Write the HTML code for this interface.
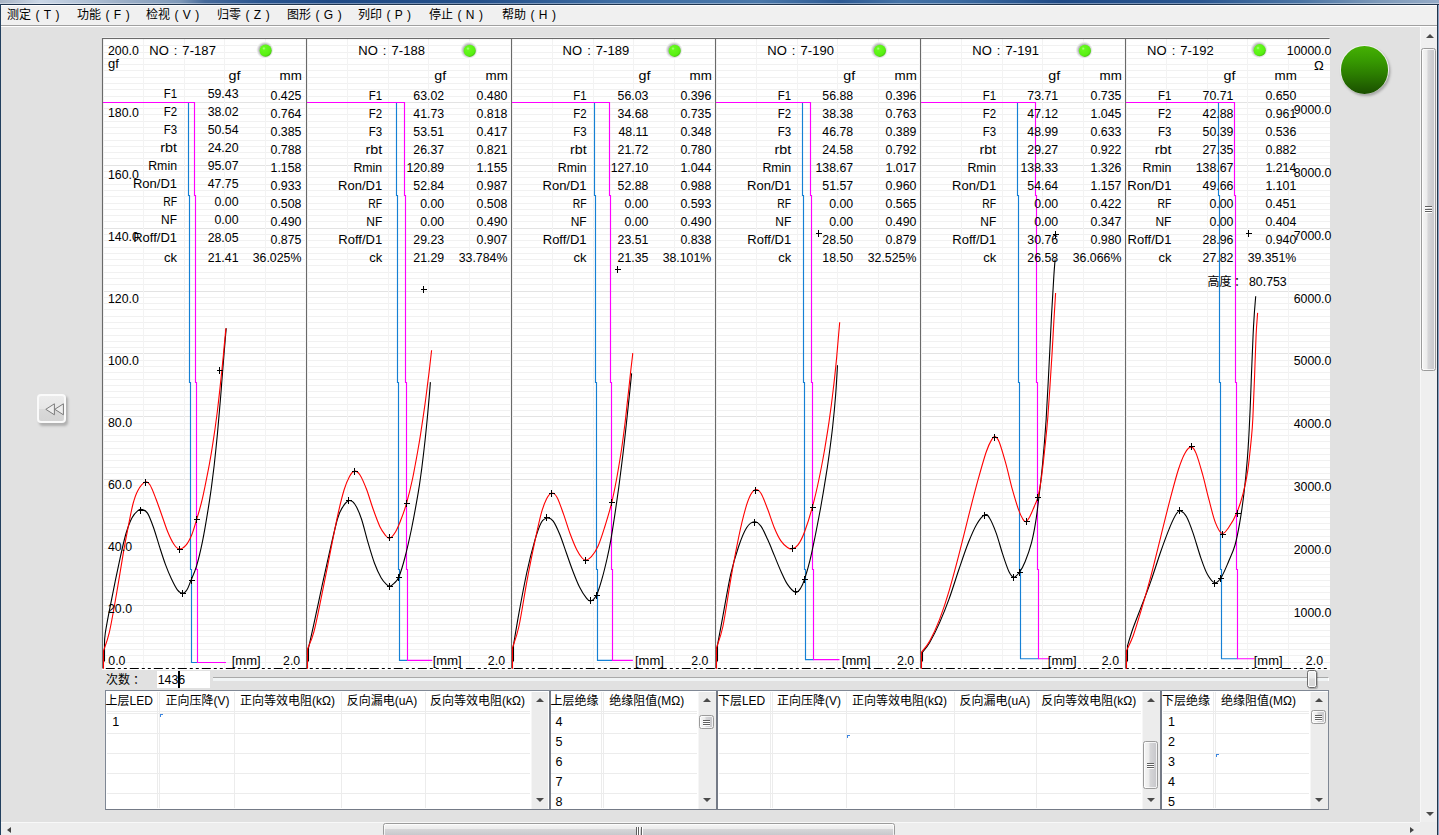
<!DOCTYPE html><html lang="zh"><head><meta charset="utf-8"><title>测定</title><style>

html,body{margin:0;padding:0}
body{width:1439px;height:835px;overflow:hidden;position:relative;background:#e1e1e1;font-family:"Liberation Sans","Noto Sans CJK SC",sans-serif;font-size:13px;color:#000}
.abs{position:absolute}
#titlebar{left:0;top:0;width:1439px;height:4px;background:linear-gradient(90deg,#a8b4c4 0px,#c9d6e6 40px,#9db0c8 120px,#7e98b8 180px,#45699a 205px,#2a5590 260px,#1f4a86 330px,#24508a 480px,#3f6ea4 620px,#4a78aa 760px,#2d5a94 840px,#4472a6 900px,#3b6aa0 960px,#1f4a86 1060px,#2a5690 1200px,#4a74a4 1300px,#7e9aba 1380px,#94aac6 1439px)}
#titlebar2{left:0;top:3px;width:1439px;height:1px;background:rgba(255,255,255,.4)}
#titlebar3{left:0;top:4px;width:1439px;height:1px;background:#1f344e}
#frameL{left:0;top:4px;width:1.2px;height:831px;background:#22405f}
#frameR{left:1436px;top:5px;width:3px;height:830px;background:linear-gradient(90deg,#fdfdfd 0,#fdfdfd 33%,#22354b 34%,#22354b 70%,#8aa3c2 72%)}
#menubar{left:1px;top:5px;width:1436px;height:20px;background:#f0f0f0;border-top:1px solid #fff;box-sizing:content-box;height:19px;border-bottom:1px solid #a0a0a0;box-shadow:0 1px 0 #fff;font-size:12px}
#menubar span{position:absolute;top:2px;word-spacing:1.1px;white-space:pre;line-height:15px}
svg text{font-family:"Liberation Sans","Noto Sans CJK SC",sans-serif}
.t{position:absolute;white-space:pre;line-height:16px}

#bigled{left:1339.8px;top:44.9px;width:49.6px;height:49.6px;border-radius:50%;background:#f1f1f1;box-shadow:1.5px 2px 2.5px rgba(0,0,0,.26)}
#bigled i{position:absolute;left:0.9px;top:0.9px;width:47.8px;height:47.8px;border-radius:50%;background:linear-gradient(#45b103 0,#379a01 30%,#2b7c00 60%,#1a4e00 100%)}
#rew{left:37px;top:394px;width:29px;height:29px;border-radius:4px;background:#fafafa;box-shadow:2px 2.5px 2.5px rgba(0,0,0,.22)}
#rew i{position:absolute;left:2px;top:2px;right:2px;bottom:2px;border-radius:2px;background:linear-gradient(#ececec 0,#e6e6e6 50%,#d9d9d9 52%,#d4d4d4 100%)}
#cnt{left:106px;top:672px;font-size:12px;line-height:16px;white-space:pre}
#cntbox{left:157px;top:671px;width:53px;height:17px;background:#fff}
#cntbox span{position:absolute;left:0.7px;top:1.5px;font-size:12.4px;line-height:14px}
#caret{left:178.3px;top:671px;width:1.5px;height:16.5px;background:#000}
#trk{left:213px;top:677px;width:1116px;height:4px;background:#f1f4f5;border-top:1px solid #a9a9a9;box-sizing:border-box;border-right:1px solid #fff}
#knob{left:1307.3px;top:669.6px;width:9.4px;height:18.2px;box-sizing:border-box;border:1px solid #6c6c6c;border-radius:2.5px;background:linear-gradient(#f3f3f3 0,#e9e9e9 46%,#dcdcdc 48%,#d6d6d6 100%);box-shadow:inset 0 0 0 1px #fbfbfb,1px 1px 1px rgba(0,0,0,.25)}
#tbl{left:105px;top:690px;width:1224px;height:120px;background:#fff;box-sizing:border-box;border:1px solid #7f8794;border-bottom-color:#747a86;font-size:12px}
#tbl .h{position:absolute;top:1.8px;line-height:16px;white-space:pre}
#tbl .n{position:absolute;line-height:16px;font-size:12.6px}
.sb{position:absolute;top:1px;height:117px;background:#ececec;border-left:1px solid #f6f6f6;box-sizing:border-box}
.sep{position:absolute;top:0;height:118px;width:2px;background:#747a86}
.au,.ad{position:absolute;width:0;height:0;border-left:4px solid transparent;border-right:4px solid transparent;}
.au{border-bottom:4px solid #4a4a4a}
.ad{border-top:4px solid #4a4a4a}
.th{position:absolute;box-sizing:border-box;border:1px solid #9b9b9b;border-radius:2.5px;background:linear-gradient(90deg,#f5f5f5 0,#ececec 38%,#d6d6d8 46%,#c6c6ca 100%);box-shadow:inset 0 0 0 1px rgba(255,255,255,.75)}
.gr{position:absolute;left:3px;right:3px;height:1px;background:#5f5f5f;box-shadow:0 1px 0 #fff}
#vsb{left:1420px;top:27px;width:17px;height:796px;background:#efefef;border-left:1px solid #f7f7f7;box-sizing:border-box}
#hsb{left:1px;top:822px;width:1419px;height:13px;background:#ededed;border-top:1px solid #f8f8f8;box-sizing:border-box}
#corner{left:1420px;top:822px;width:17px;height:13px;background:#ececec}
.al,.ar{position:absolute;width:0;height:0;border-top:3.5px solid transparent;border-bottom:3.5px solid transparent}
.al{border-right:4px solid #444}
.ar{border-left:4px solid #444}
.thh{position:absolute;box-sizing:border-box;border:1px solid #9b9b9b;border-radius:2.5px;background:linear-gradient(#f5f5f5 0,#ececec 38%,#d6d6d8 46%,#c6c6ca 100%);box-shadow:inset 0 0 0 1px rgba(255,255,255,.75)}
.gv{position:absolute;top:3px;width:1px;height:8px;background:#5f5f5f;box-shadow:1px 0 0 #fff}
.cm{position:absolute;width:3px;height:3px;border-left:1px solid #3d86e0;border-top:1px solid #3d86e0;box-sizing:border-box}

</style></head><body>
<div class="abs" id="titlebar"></div><div class="abs" id="titlebar2"></div><div class="abs" id="titlebar3"></div><div class="abs" id="frameL"></div><div class="abs" id="frameR"></div>
<div class="abs" id="menubar">
<span style="left:6px">测定 ( T )</span>
<span style="left:76px">功能 ( F )</span>
<span style="left:145px">检视 ( V )</span>
<span style="left:216px">归零 ( Z )</span>
<span style="left:286px">图形 ( G )</span>
<span style="left:357px">列印 ( P )</span>
<span style="left:428px">停止 ( N )</span>
<span style="left:501px">帮助 ( H )</span>
</div>
<svg class="abs" style="left:100px;top:36px" width="1232" height="634" viewBox="100 36 1232 634" font-size="13">
<rect x="102" y="38" width="1228" height="632" fill="#fff"/>
<g shape-rendering="crispEdges"><line x1="104" x2="305" y1="662.5" y2="662.5" stroke="#f1f1f1"/><line x1="308" x2="510" y1="662.5" y2="662.5" stroke="#f1f1f1"/><line x1="513" x2="714" y1="662.5" y2="662.5" stroke="#f1f1f1"/><line x1="717" x2="919" y1="662.5" y2="662.5" stroke="#f1f1f1"/><line x1="922" x2="1124" y1="662.5" y2="662.5" stroke="#f1f1f1"/><line x1="1127" x2="1329.6" y1="662.5" y2="662.5" stroke="#f1f1f1"/><line x1="104" x2="305" y1="655.5" y2="655.5" stroke="#f1f1f1"/><line x1="308" x2="510" y1="655.5" y2="655.5" stroke="#f1f1f1"/><line x1="513" x2="714" y1="655.5" y2="655.5" stroke="#f1f1f1"/><line x1="717" x2="919" y1="655.5" y2="655.5" stroke="#f1f1f1"/><line x1="922" x2="1124" y1="655.5" y2="655.5" stroke="#f1f1f1"/><line x1="1127" x2="1329.6" y1="655.5" y2="655.5" stroke="#f1f1f1"/><line x1="104" x2="305" y1="649.5" y2="649.5" stroke="#f1f1f1"/><line x1="308" x2="510" y1="649.5" y2="649.5" stroke="#f1f1f1"/><line x1="513" x2="714" y1="649.5" y2="649.5" stroke="#f1f1f1"/><line x1="717" x2="919" y1="649.5" y2="649.5" stroke="#f1f1f1"/><line x1="922" x2="1124" y1="649.5" y2="649.5" stroke="#f1f1f1"/><line x1="1127" x2="1329.6" y1="649.5" y2="649.5" stroke="#f1f1f1"/><line x1="104" x2="305" y1="643.5" y2="643.5" stroke="#f1f1f1"/><line x1="308" x2="510" y1="643.5" y2="643.5" stroke="#f1f1f1"/><line x1="513" x2="714" y1="643.5" y2="643.5" stroke="#f1f1f1"/><line x1="717" x2="919" y1="643.5" y2="643.5" stroke="#f1f1f1"/><line x1="922" x2="1124" y1="643.5" y2="643.5" stroke="#f1f1f1"/><line x1="1127" x2="1329.6" y1="643.5" y2="643.5" stroke="#f1f1f1"/><line x1="104" x2="305" y1="636.5" y2="636.5" stroke="#f1f1f1"/><line x1="308" x2="510" y1="636.5" y2="636.5" stroke="#f1f1f1"/><line x1="513" x2="714" y1="636.5" y2="636.5" stroke="#f1f1f1"/><line x1="717" x2="919" y1="636.5" y2="636.5" stroke="#f1f1f1"/><line x1="922" x2="1124" y1="636.5" y2="636.5" stroke="#f1f1f1"/><line x1="1127" x2="1329.6" y1="636.5" y2="636.5" stroke="#f1f1f1"/><line x1="104" x2="305" y1="630.5" y2="630.5" stroke="#f1f1f1"/><line x1="308" x2="510" y1="630.5" y2="630.5" stroke="#f1f1f1"/><line x1="513" x2="714" y1="630.5" y2="630.5" stroke="#f1f1f1"/><line x1="717" x2="919" y1="630.5" y2="630.5" stroke="#f1f1f1"/><line x1="922" x2="1124" y1="630.5" y2="630.5" stroke="#f1f1f1"/><line x1="1127" x2="1329.6" y1="630.5" y2="630.5" stroke="#f1f1f1"/><line x1="104" x2="305" y1="624.5" y2="624.5" stroke="#f1f1f1"/><line x1="308" x2="510" y1="624.5" y2="624.5" stroke="#f1f1f1"/><line x1="513" x2="714" y1="624.5" y2="624.5" stroke="#f1f1f1"/><line x1="717" x2="919" y1="624.5" y2="624.5" stroke="#f1f1f1"/><line x1="922" x2="1124" y1="624.5" y2="624.5" stroke="#f1f1f1"/><line x1="1127" x2="1329.6" y1="624.5" y2="624.5" stroke="#f1f1f1"/><line x1="104" x2="305" y1="618.5" y2="618.5" stroke="#f1f1f1"/><line x1="308" x2="510" y1="618.5" y2="618.5" stroke="#f1f1f1"/><line x1="513" x2="714" y1="618.5" y2="618.5" stroke="#f1f1f1"/><line x1="717" x2="919" y1="618.5" y2="618.5" stroke="#f1f1f1"/><line x1="922" x2="1124" y1="618.5" y2="618.5" stroke="#f1f1f1"/><line x1="1127" x2="1329.6" y1="618.5" y2="618.5" stroke="#f1f1f1"/><line x1="104" x2="305" y1="611.5" y2="611.5" stroke="#f1f1f1"/><line x1="308" x2="510" y1="611.5" y2="611.5" stroke="#f1f1f1"/><line x1="513" x2="714" y1="611.5" y2="611.5" stroke="#f1f1f1"/><line x1="717" x2="919" y1="611.5" y2="611.5" stroke="#f1f1f1"/><line x1="922" x2="1124" y1="611.5" y2="611.5" stroke="#f1f1f1"/><line x1="1127" x2="1329.6" y1="611.5" y2="611.5" stroke="#f1f1f1"/><line x1="104" x2="305" y1="605.5" y2="605.5" stroke="#e3e3e3"/><line x1="308" x2="510" y1="605.5" y2="605.5" stroke="#e3e3e3"/><line x1="513" x2="714" y1="605.5" y2="605.5" stroke="#e3e3e3"/><line x1="717" x2="919" y1="605.5" y2="605.5" stroke="#e3e3e3"/><line x1="922" x2="1124" y1="605.5" y2="605.5" stroke="#e3e3e3"/><line x1="1127" x2="1329.6" y1="605.5" y2="605.5" stroke="#e3e3e3"/><line x1="104" x2="305" y1="599.5" y2="599.5" stroke="#f1f1f1"/><line x1="308" x2="510" y1="599.5" y2="599.5" stroke="#f1f1f1"/><line x1="513" x2="714" y1="599.5" y2="599.5" stroke="#f1f1f1"/><line x1="717" x2="919" y1="599.5" y2="599.5" stroke="#f1f1f1"/><line x1="922" x2="1124" y1="599.5" y2="599.5" stroke="#f1f1f1"/><line x1="1127" x2="1329.6" y1="599.5" y2="599.5" stroke="#f1f1f1"/><line x1="104" x2="305" y1="592.5" y2="592.5" stroke="#f1f1f1"/><line x1="308" x2="510" y1="592.5" y2="592.5" stroke="#f1f1f1"/><line x1="513" x2="714" y1="592.5" y2="592.5" stroke="#f1f1f1"/><line x1="717" x2="919" y1="592.5" y2="592.5" stroke="#f1f1f1"/><line x1="922" x2="1124" y1="592.5" y2="592.5" stroke="#f1f1f1"/><line x1="1127" x2="1329.6" y1="592.5" y2="592.5" stroke="#f1f1f1"/><line x1="104" x2="305" y1="586.5" y2="586.5" stroke="#f1f1f1"/><line x1="308" x2="510" y1="586.5" y2="586.5" stroke="#f1f1f1"/><line x1="513" x2="714" y1="586.5" y2="586.5" stroke="#f1f1f1"/><line x1="717" x2="919" y1="586.5" y2="586.5" stroke="#f1f1f1"/><line x1="922" x2="1124" y1="586.5" y2="586.5" stroke="#f1f1f1"/><line x1="1127" x2="1329.6" y1="586.5" y2="586.5" stroke="#f1f1f1"/><line x1="104" x2="305" y1="580.5" y2="580.5" stroke="#f1f1f1"/><line x1="308" x2="510" y1="580.5" y2="580.5" stroke="#f1f1f1"/><line x1="513" x2="714" y1="580.5" y2="580.5" stroke="#f1f1f1"/><line x1="717" x2="919" y1="580.5" y2="580.5" stroke="#f1f1f1"/><line x1="922" x2="1124" y1="580.5" y2="580.5" stroke="#f1f1f1"/><line x1="1127" x2="1329.6" y1="580.5" y2="580.5" stroke="#f1f1f1"/><line x1="104" x2="305" y1="574.5" y2="574.5" stroke="#f1f1f1"/><line x1="308" x2="510" y1="574.5" y2="574.5" stroke="#f1f1f1"/><line x1="513" x2="714" y1="574.5" y2="574.5" stroke="#f1f1f1"/><line x1="717" x2="919" y1="574.5" y2="574.5" stroke="#f1f1f1"/><line x1="922" x2="1124" y1="574.5" y2="574.5" stroke="#f1f1f1"/><line x1="1127" x2="1329.6" y1="574.5" y2="574.5" stroke="#f1f1f1"/><line x1="104" x2="305" y1="567.5" y2="567.5" stroke="#f1f1f1"/><line x1="308" x2="510" y1="567.5" y2="567.5" stroke="#f1f1f1"/><line x1="513" x2="714" y1="567.5" y2="567.5" stroke="#f1f1f1"/><line x1="717" x2="919" y1="567.5" y2="567.5" stroke="#f1f1f1"/><line x1="922" x2="1124" y1="567.5" y2="567.5" stroke="#f1f1f1"/><line x1="1127" x2="1329.6" y1="567.5" y2="567.5" stroke="#f1f1f1"/><line x1="104" x2="305" y1="561.5" y2="561.5" stroke="#f1f1f1"/><line x1="308" x2="510" y1="561.5" y2="561.5" stroke="#f1f1f1"/><line x1="513" x2="714" y1="561.5" y2="561.5" stroke="#f1f1f1"/><line x1="717" x2="919" y1="561.5" y2="561.5" stroke="#f1f1f1"/><line x1="922" x2="1124" y1="561.5" y2="561.5" stroke="#f1f1f1"/><line x1="1127" x2="1329.6" y1="561.5" y2="561.5" stroke="#f1f1f1"/><line x1="104" x2="305" y1="555.5" y2="555.5" stroke="#f1f1f1"/><line x1="308" x2="510" y1="555.5" y2="555.5" stroke="#f1f1f1"/><line x1="513" x2="714" y1="555.5" y2="555.5" stroke="#f1f1f1"/><line x1="717" x2="919" y1="555.5" y2="555.5" stroke="#f1f1f1"/><line x1="922" x2="1124" y1="555.5" y2="555.5" stroke="#f1f1f1"/><line x1="1127" x2="1329.6" y1="555.5" y2="555.5" stroke="#f1f1f1"/><line x1="104" x2="305" y1="548.5" y2="548.5" stroke="#f1f1f1"/><line x1="308" x2="510" y1="548.5" y2="548.5" stroke="#f1f1f1"/><line x1="513" x2="714" y1="548.5" y2="548.5" stroke="#f1f1f1"/><line x1="717" x2="919" y1="548.5" y2="548.5" stroke="#f1f1f1"/><line x1="922" x2="1124" y1="548.5" y2="548.5" stroke="#f1f1f1"/><line x1="1127" x2="1329.6" y1="548.5" y2="548.5" stroke="#f1f1f1"/><line x1="104" x2="305" y1="542.5" y2="542.5" stroke="#e3e3e3"/><line x1="308" x2="510" y1="542.5" y2="542.5" stroke="#e3e3e3"/><line x1="513" x2="714" y1="542.5" y2="542.5" stroke="#e3e3e3"/><line x1="717" x2="919" y1="542.5" y2="542.5" stroke="#e3e3e3"/><line x1="922" x2="1124" y1="542.5" y2="542.5" stroke="#e3e3e3"/><line x1="1127" x2="1329.6" y1="542.5" y2="542.5" stroke="#e3e3e3"/><line x1="104" x2="305" y1="536.5" y2="536.5" stroke="#f1f1f1"/><line x1="308" x2="510" y1="536.5" y2="536.5" stroke="#f1f1f1"/><line x1="513" x2="714" y1="536.5" y2="536.5" stroke="#f1f1f1"/><line x1="717" x2="919" y1="536.5" y2="536.5" stroke="#f1f1f1"/><line x1="922" x2="1124" y1="536.5" y2="536.5" stroke="#f1f1f1"/><line x1="1127" x2="1329.6" y1="536.5" y2="536.5" stroke="#f1f1f1"/><line x1="104" x2="305" y1="529.5" y2="529.5" stroke="#f1f1f1"/><line x1="308" x2="510" y1="529.5" y2="529.5" stroke="#f1f1f1"/><line x1="513" x2="714" y1="529.5" y2="529.5" stroke="#f1f1f1"/><line x1="717" x2="919" y1="529.5" y2="529.5" stroke="#f1f1f1"/><line x1="922" x2="1124" y1="529.5" y2="529.5" stroke="#f1f1f1"/><line x1="1127" x2="1329.6" y1="529.5" y2="529.5" stroke="#f1f1f1"/><line x1="104" x2="305" y1="523.5" y2="523.5" stroke="#f1f1f1"/><line x1="308" x2="510" y1="523.5" y2="523.5" stroke="#f1f1f1"/><line x1="513" x2="714" y1="523.5" y2="523.5" stroke="#f1f1f1"/><line x1="717" x2="919" y1="523.5" y2="523.5" stroke="#f1f1f1"/><line x1="922" x2="1124" y1="523.5" y2="523.5" stroke="#f1f1f1"/><line x1="1127" x2="1329.6" y1="523.5" y2="523.5" stroke="#f1f1f1"/><line x1="104" x2="305" y1="517.5" y2="517.5" stroke="#f1f1f1"/><line x1="308" x2="510" y1="517.5" y2="517.5" stroke="#f1f1f1"/><line x1="513" x2="714" y1="517.5" y2="517.5" stroke="#f1f1f1"/><line x1="717" x2="919" y1="517.5" y2="517.5" stroke="#f1f1f1"/><line x1="922" x2="1124" y1="517.5" y2="517.5" stroke="#f1f1f1"/><line x1="1127" x2="1329.6" y1="517.5" y2="517.5" stroke="#f1f1f1"/><line x1="104" x2="305" y1="511.5" y2="511.5" stroke="#f1f1f1"/><line x1="308" x2="510" y1="511.5" y2="511.5" stroke="#f1f1f1"/><line x1="513" x2="714" y1="511.5" y2="511.5" stroke="#f1f1f1"/><line x1="717" x2="919" y1="511.5" y2="511.5" stroke="#f1f1f1"/><line x1="922" x2="1124" y1="511.5" y2="511.5" stroke="#f1f1f1"/><line x1="1127" x2="1329.6" y1="511.5" y2="511.5" stroke="#f1f1f1"/><line x1="104" x2="305" y1="504.5" y2="504.5" stroke="#f1f1f1"/><line x1="308" x2="510" y1="504.5" y2="504.5" stroke="#f1f1f1"/><line x1="513" x2="714" y1="504.5" y2="504.5" stroke="#f1f1f1"/><line x1="717" x2="919" y1="504.5" y2="504.5" stroke="#f1f1f1"/><line x1="922" x2="1124" y1="504.5" y2="504.5" stroke="#f1f1f1"/><line x1="1127" x2="1329.6" y1="504.5" y2="504.5" stroke="#f1f1f1"/><line x1="104" x2="305" y1="498.5" y2="498.5" stroke="#f1f1f1"/><line x1="308" x2="510" y1="498.5" y2="498.5" stroke="#f1f1f1"/><line x1="513" x2="714" y1="498.5" y2="498.5" stroke="#f1f1f1"/><line x1="717" x2="919" y1="498.5" y2="498.5" stroke="#f1f1f1"/><line x1="922" x2="1124" y1="498.5" y2="498.5" stroke="#f1f1f1"/><line x1="1127" x2="1329.6" y1="498.5" y2="498.5" stroke="#f1f1f1"/><line x1="104" x2="305" y1="492.5" y2="492.5" stroke="#f1f1f1"/><line x1="308" x2="510" y1="492.5" y2="492.5" stroke="#f1f1f1"/><line x1="513" x2="714" y1="492.5" y2="492.5" stroke="#f1f1f1"/><line x1="717" x2="919" y1="492.5" y2="492.5" stroke="#f1f1f1"/><line x1="922" x2="1124" y1="492.5" y2="492.5" stroke="#f1f1f1"/><line x1="1127" x2="1329.6" y1="492.5" y2="492.5" stroke="#f1f1f1"/><line x1="104" x2="305" y1="485.5" y2="485.5" stroke="#f1f1f1"/><line x1="308" x2="510" y1="485.5" y2="485.5" stroke="#f1f1f1"/><line x1="513" x2="714" y1="485.5" y2="485.5" stroke="#f1f1f1"/><line x1="717" x2="919" y1="485.5" y2="485.5" stroke="#f1f1f1"/><line x1="922" x2="1124" y1="485.5" y2="485.5" stroke="#f1f1f1"/><line x1="1127" x2="1329.6" y1="485.5" y2="485.5" stroke="#f1f1f1"/><line x1="104" x2="305" y1="479.5" y2="479.5" stroke="#e3e3e3"/><line x1="308" x2="510" y1="479.5" y2="479.5" stroke="#e3e3e3"/><line x1="513" x2="714" y1="479.5" y2="479.5" stroke="#e3e3e3"/><line x1="717" x2="919" y1="479.5" y2="479.5" stroke="#e3e3e3"/><line x1="922" x2="1124" y1="479.5" y2="479.5" stroke="#e3e3e3"/><line x1="1127" x2="1329.6" y1="479.5" y2="479.5" stroke="#e3e3e3"/><line x1="104" x2="305" y1="473.5" y2="473.5" stroke="#f1f1f1"/><line x1="308" x2="510" y1="473.5" y2="473.5" stroke="#f1f1f1"/><line x1="513" x2="714" y1="473.5" y2="473.5" stroke="#f1f1f1"/><line x1="717" x2="919" y1="473.5" y2="473.5" stroke="#f1f1f1"/><line x1="922" x2="1124" y1="473.5" y2="473.5" stroke="#f1f1f1"/><line x1="1127" x2="1329.6" y1="473.5" y2="473.5" stroke="#f1f1f1"/><line x1="104" x2="305" y1="467.5" y2="467.5" stroke="#f1f1f1"/><line x1="308" x2="510" y1="467.5" y2="467.5" stroke="#f1f1f1"/><line x1="513" x2="714" y1="467.5" y2="467.5" stroke="#f1f1f1"/><line x1="717" x2="919" y1="467.5" y2="467.5" stroke="#f1f1f1"/><line x1="922" x2="1124" y1="467.5" y2="467.5" stroke="#f1f1f1"/><line x1="1127" x2="1329.6" y1="467.5" y2="467.5" stroke="#f1f1f1"/><line x1="104" x2="305" y1="460.5" y2="460.5" stroke="#f1f1f1"/><line x1="308" x2="510" y1="460.5" y2="460.5" stroke="#f1f1f1"/><line x1="513" x2="714" y1="460.5" y2="460.5" stroke="#f1f1f1"/><line x1="717" x2="919" y1="460.5" y2="460.5" stroke="#f1f1f1"/><line x1="922" x2="1124" y1="460.5" y2="460.5" stroke="#f1f1f1"/><line x1="1127" x2="1329.6" y1="460.5" y2="460.5" stroke="#f1f1f1"/><line x1="104" x2="305" y1="454.5" y2="454.5" stroke="#f1f1f1"/><line x1="308" x2="510" y1="454.5" y2="454.5" stroke="#f1f1f1"/><line x1="513" x2="714" y1="454.5" y2="454.5" stroke="#f1f1f1"/><line x1="717" x2="919" y1="454.5" y2="454.5" stroke="#f1f1f1"/><line x1="922" x2="1124" y1="454.5" y2="454.5" stroke="#f1f1f1"/><line x1="1127" x2="1329.6" y1="454.5" y2="454.5" stroke="#f1f1f1"/><line x1="104" x2="305" y1="448.5" y2="448.5" stroke="#f1f1f1"/><line x1="308" x2="510" y1="448.5" y2="448.5" stroke="#f1f1f1"/><line x1="513" x2="714" y1="448.5" y2="448.5" stroke="#f1f1f1"/><line x1="717" x2="919" y1="448.5" y2="448.5" stroke="#f1f1f1"/><line x1="922" x2="1124" y1="448.5" y2="448.5" stroke="#f1f1f1"/><line x1="1127" x2="1329.6" y1="448.5" y2="448.5" stroke="#f1f1f1"/><line x1="104" x2="305" y1="441.5" y2="441.5" stroke="#f1f1f1"/><line x1="308" x2="510" y1="441.5" y2="441.5" stroke="#f1f1f1"/><line x1="513" x2="714" y1="441.5" y2="441.5" stroke="#f1f1f1"/><line x1="717" x2="919" y1="441.5" y2="441.5" stroke="#f1f1f1"/><line x1="922" x2="1124" y1="441.5" y2="441.5" stroke="#f1f1f1"/><line x1="1127" x2="1329.6" y1="441.5" y2="441.5" stroke="#f1f1f1"/><line x1="104" x2="305" y1="435.5" y2="435.5" stroke="#f1f1f1"/><line x1="308" x2="510" y1="435.5" y2="435.5" stroke="#f1f1f1"/><line x1="513" x2="714" y1="435.5" y2="435.5" stroke="#f1f1f1"/><line x1="717" x2="919" y1="435.5" y2="435.5" stroke="#f1f1f1"/><line x1="922" x2="1124" y1="435.5" y2="435.5" stroke="#f1f1f1"/><line x1="1127" x2="1329.6" y1="435.5" y2="435.5" stroke="#f1f1f1"/><line x1="104" x2="305" y1="429.5" y2="429.5" stroke="#f1f1f1"/><line x1="308" x2="510" y1="429.5" y2="429.5" stroke="#f1f1f1"/><line x1="513" x2="714" y1="429.5" y2="429.5" stroke="#f1f1f1"/><line x1="717" x2="919" y1="429.5" y2="429.5" stroke="#f1f1f1"/><line x1="922" x2="1124" y1="429.5" y2="429.5" stroke="#f1f1f1"/><line x1="1127" x2="1329.6" y1="429.5" y2="429.5" stroke="#f1f1f1"/><line x1="104" x2="305" y1="423.5" y2="423.5" stroke="#f1f1f1"/><line x1="308" x2="510" y1="423.5" y2="423.5" stroke="#f1f1f1"/><line x1="513" x2="714" y1="423.5" y2="423.5" stroke="#f1f1f1"/><line x1="717" x2="919" y1="423.5" y2="423.5" stroke="#f1f1f1"/><line x1="922" x2="1124" y1="423.5" y2="423.5" stroke="#f1f1f1"/><line x1="1127" x2="1329.6" y1="423.5" y2="423.5" stroke="#f1f1f1"/><line x1="104" x2="305" y1="416.5" y2="416.5" stroke="#e3e3e3"/><line x1="308" x2="510" y1="416.5" y2="416.5" stroke="#e3e3e3"/><line x1="513" x2="714" y1="416.5" y2="416.5" stroke="#e3e3e3"/><line x1="717" x2="919" y1="416.5" y2="416.5" stroke="#e3e3e3"/><line x1="922" x2="1124" y1="416.5" y2="416.5" stroke="#e3e3e3"/><line x1="1127" x2="1329.6" y1="416.5" y2="416.5" stroke="#e3e3e3"/><line x1="104" x2="305" y1="410.5" y2="410.5" stroke="#f1f1f1"/><line x1="308" x2="510" y1="410.5" y2="410.5" stroke="#f1f1f1"/><line x1="513" x2="714" y1="410.5" y2="410.5" stroke="#f1f1f1"/><line x1="717" x2="919" y1="410.5" y2="410.5" stroke="#f1f1f1"/><line x1="922" x2="1124" y1="410.5" y2="410.5" stroke="#f1f1f1"/><line x1="1127" x2="1329.6" y1="410.5" y2="410.5" stroke="#f1f1f1"/><line x1="104" x2="305" y1="404.5" y2="404.5" stroke="#f1f1f1"/><line x1="308" x2="510" y1="404.5" y2="404.5" stroke="#f1f1f1"/><line x1="513" x2="714" y1="404.5" y2="404.5" stroke="#f1f1f1"/><line x1="717" x2="919" y1="404.5" y2="404.5" stroke="#f1f1f1"/><line x1="922" x2="1124" y1="404.5" y2="404.5" stroke="#f1f1f1"/><line x1="1127" x2="1329.6" y1="404.5" y2="404.5" stroke="#f1f1f1"/><line x1="104" x2="305" y1="397.5" y2="397.5" stroke="#f1f1f1"/><line x1="308" x2="510" y1="397.5" y2="397.5" stroke="#f1f1f1"/><line x1="513" x2="714" y1="397.5" y2="397.5" stroke="#f1f1f1"/><line x1="717" x2="919" y1="397.5" y2="397.5" stroke="#f1f1f1"/><line x1="922" x2="1124" y1="397.5" y2="397.5" stroke="#f1f1f1"/><line x1="1127" x2="1329.6" y1="397.5" y2="397.5" stroke="#f1f1f1"/><line x1="104" x2="305" y1="391.5" y2="391.5" stroke="#f1f1f1"/><line x1="308" x2="510" y1="391.5" y2="391.5" stroke="#f1f1f1"/><line x1="513" x2="714" y1="391.5" y2="391.5" stroke="#f1f1f1"/><line x1="717" x2="919" y1="391.5" y2="391.5" stroke="#f1f1f1"/><line x1="922" x2="1124" y1="391.5" y2="391.5" stroke="#f1f1f1"/><line x1="1127" x2="1329.6" y1="391.5" y2="391.5" stroke="#f1f1f1"/><line x1="104" x2="305" y1="385.5" y2="385.5" stroke="#f1f1f1"/><line x1="308" x2="510" y1="385.5" y2="385.5" stroke="#f1f1f1"/><line x1="513" x2="714" y1="385.5" y2="385.5" stroke="#f1f1f1"/><line x1="717" x2="919" y1="385.5" y2="385.5" stroke="#f1f1f1"/><line x1="922" x2="1124" y1="385.5" y2="385.5" stroke="#f1f1f1"/><line x1="1127" x2="1329.6" y1="385.5" y2="385.5" stroke="#f1f1f1"/><line x1="104" x2="305" y1="379.5" y2="379.5" stroke="#f1f1f1"/><line x1="308" x2="510" y1="379.5" y2="379.5" stroke="#f1f1f1"/><line x1="513" x2="714" y1="379.5" y2="379.5" stroke="#f1f1f1"/><line x1="717" x2="919" y1="379.5" y2="379.5" stroke="#f1f1f1"/><line x1="922" x2="1124" y1="379.5" y2="379.5" stroke="#f1f1f1"/><line x1="1127" x2="1329.6" y1="379.5" y2="379.5" stroke="#f1f1f1"/><line x1="104" x2="305" y1="372.5" y2="372.5" stroke="#f1f1f1"/><line x1="308" x2="510" y1="372.5" y2="372.5" stroke="#f1f1f1"/><line x1="513" x2="714" y1="372.5" y2="372.5" stroke="#f1f1f1"/><line x1="717" x2="919" y1="372.5" y2="372.5" stroke="#f1f1f1"/><line x1="922" x2="1124" y1="372.5" y2="372.5" stroke="#f1f1f1"/><line x1="1127" x2="1329.6" y1="372.5" y2="372.5" stroke="#f1f1f1"/><line x1="104" x2="305" y1="366.5" y2="366.5" stroke="#f1f1f1"/><line x1="308" x2="510" y1="366.5" y2="366.5" stroke="#f1f1f1"/><line x1="513" x2="714" y1="366.5" y2="366.5" stroke="#f1f1f1"/><line x1="717" x2="919" y1="366.5" y2="366.5" stroke="#f1f1f1"/><line x1="922" x2="1124" y1="366.5" y2="366.5" stroke="#f1f1f1"/><line x1="1127" x2="1329.6" y1="366.5" y2="366.5" stroke="#f1f1f1"/><line x1="104" x2="305" y1="360.5" y2="360.5" stroke="#f1f1f1"/><line x1="308" x2="510" y1="360.5" y2="360.5" stroke="#f1f1f1"/><line x1="513" x2="714" y1="360.5" y2="360.5" stroke="#f1f1f1"/><line x1="717" x2="919" y1="360.5" y2="360.5" stroke="#f1f1f1"/><line x1="922" x2="1124" y1="360.5" y2="360.5" stroke="#f1f1f1"/><line x1="1127" x2="1329.6" y1="360.5" y2="360.5" stroke="#f1f1f1"/><line x1="104" x2="305" y1="353.5" y2="353.5" stroke="#e3e3e3"/><line x1="308" x2="510" y1="353.5" y2="353.5" stroke="#e3e3e3"/><line x1="513" x2="714" y1="353.5" y2="353.5" stroke="#e3e3e3"/><line x1="717" x2="919" y1="353.5" y2="353.5" stroke="#e3e3e3"/><line x1="922" x2="1124" y1="353.5" y2="353.5" stroke="#e3e3e3"/><line x1="1127" x2="1329.6" y1="353.5" y2="353.5" stroke="#e3e3e3"/><line x1="104" x2="305" y1="347.5" y2="347.5" stroke="#f1f1f1"/><line x1="308" x2="510" y1="347.5" y2="347.5" stroke="#f1f1f1"/><line x1="513" x2="714" y1="347.5" y2="347.5" stroke="#f1f1f1"/><line x1="717" x2="919" y1="347.5" y2="347.5" stroke="#f1f1f1"/><line x1="922" x2="1124" y1="347.5" y2="347.5" stroke="#f1f1f1"/><line x1="1127" x2="1329.6" y1="347.5" y2="347.5" stroke="#f1f1f1"/><line x1="104" x2="305" y1="341.5" y2="341.5" stroke="#f1f1f1"/><line x1="308" x2="510" y1="341.5" y2="341.5" stroke="#f1f1f1"/><line x1="513" x2="714" y1="341.5" y2="341.5" stroke="#f1f1f1"/><line x1="717" x2="919" y1="341.5" y2="341.5" stroke="#f1f1f1"/><line x1="922" x2="1124" y1="341.5" y2="341.5" stroke="#f1f1f1"/><line x1="1127" x2="1329.6" y1="341.5" y2="341.5" stroke="#f1f1f1"/><line x1="104" x2="305" y1="335.5" y2="335.5" stroke="#f1f1f1"/><line x1="308" x2="510" y1="335.5" y2="335.5" stroke="#f1f1f1"/><line x1="513" x2="714" y1="335.5" y2="335.5" stroke="#f1f1f1"/><line x1="717" x2="919" y1="335.5" y2="335.5" stroke="#f1f1f1"/><line x1="922" x2="1124" y1="335.5" y2="335.5" stroke="#f1f1f1"/><line x1="1127" x2="1329.6" y1="335.5" y2="335.5" stroke="#f1f1f1"/><line x1="104" x2="305" y1="328.5" y2="328.5" stroke="#f1f1f1"/><line x1="308" x2="510" y1="328.5" y2="328.5" stroke="#f1f1f1"/><line x1="513" x2="714" y1="328.5" y2="328.5" stroke="#f1f1f1"/><line x1="717" x2="919" y1="328.5" y2="328.5" stroke="#f1f1f1"/><line x1="922" x2="1124" y1="328.5" y2="328.5" stroke="#f1f1f1"/><line x1="1127" x2="1329.6" y1="328.5" y2="328.5" stroke="#f1f1f1"/><line x1="104" x2="305" y1="322.5" y2="322.5" stroke="#f1f1f1"/><line x1="308" x2="510" y1="322.5" y2="322.5" stroke="#f1f1f1"/><line x1="513" x2="714" y1="322.5" y2="322.5" stroke="#f1f1f1"/><line x1="717" x2="919" y1="322.5" y2="322.5" stroke="#f1f1f1"/><line x1="922" x2="1124" y1="322.5" y2="322.5" stroke="#f1f1f1"/><line x1="1127" x2="1329.6" y1="322.5" y2="322.5" stroke="#f1f1f1"/><line x1="104" x2="305" y1="316.5" y2="316.5" stroke="#f1f1f1"/><line x1="308" x2="510" y1="316.5" y2="316.5" stroke="#f1f1f1"/><line x1="513" x2="714" y1="316.5" y2="316.5" stroke="#f1f1f1"/><line x1="717" x2="919" y1="316.5" y2="316.5" stroke="#f1f1f1"/><line x1="922" x2="1124" y1="316.5" y2="316.5" stroke="#f1f1f1"/><line x1="1127" x2="1329.6" y1="316.5" y2="316.5" stroke="#f1f1f1"/><line x1="104" x2="305" y1="309.5" y2="309.5" stroke="#f1f1f1"/><line x1="308" x2="510" y1="309.5" y2="309.5" stroke="#f1f1f1"/><line x1="513" x2="714" y1="309.5" y2="309.5" stroke="#f1f1f1"/><line x1="717" x2="919" y1="309.5" y2="309.5" stroke="#f1f1f1"/><line x1="922" x2="1124" y1="309.5" y2="309.5" stroke="#f1f1f1"/><line x1="1127" x2="1329.6" y1="309.5" y2="309.5" stroke="#f1f1f1"/><line x1="104" x2="305" y1="303.5" y2="303.5" stroke="#f1f1f1"/><line x1="308" x2="510" y1="303.5" y2="303.5" stroke="#f1f1f1"/><line x1="513" x2="714" y1="303.5" y2="303.5" stroke="#f1f1f1"/><line x1="717" x2="919" y1="303.5" y2="303.5" stroke="#f1f1f1"/><line x1="922" x2="1124" y1="303.5" y2="303.5" stroke="#f1f1f1"/><line x1="1127" x2="1329.6" y1="303.5" y2="303.5" stroke="#f1f1f1"/><line x1="104" x2="305" y1="297.5" y2="297.5" stroke="#f1f1f1"/><line x1="308" x2="510" y1="297.5" y2="297.5" stroke="#f1f1f1"/><line x1="513" x2="714" y1="297.5" y2="297.5" stroke="#f1f1f1"/><line x1="717" x2="919" y1="297.5" y2="297.5" stroke="#f1f1f1"/><line x1="922" x2="1124" y1="297.5" y2="297.5" stroke="#f1f1f1"/><line x1="1127" x2="1329.6" y1="297.5" y2="297.5" stroke="#f1f1f1"/><line x1="104" x2="305" y1="291.5" y2="291.5" stroke="#e3e3e3"/><line x1="308" x2="510" y1="291.5" y2="291.5" stroke="#e3e3e3"/><line x1="513" x2="714" y1="291.5" y2="291.5" stroke="#e3e3e3"/><line x1="717" x2="919" y1="291.5" y2="291.5" stroke="#e3e3e3"/><line x1="922" x2="1124" y1="291.5" y2="291.5" stroke="#e3e3e3"/><line x1="1127" x2="1329.6" y1="291.5" y2="291.5" stroke="#e3e3e3"/><line x1="104" x2="305" y1="284.5" y2="284.5" stroke="#f1f1f1"/><line x1="308" x2="510" y1="284.5" y2="284.5" stroke="#f1f1f1"/><line x1="513" x2="714" y1="284.5" y2="284.5" stroke="#f1f1f1"/><line x1="717" x2="919" y1="284.5" y2="284.5" stroke="#f1f1f1"/><line x1="922" x2="1124" y1="284.5" y2="284.5" stroke="#f1f1f1"/><line x1="1127" x2="1329.6" y1="284.5" y2="284.5" stroke="#f1f1f1"/><line x1="104" x2="305" y1="278.5" y2="278.5" stroke="#f1f1f1"/><line x1="308" x2="510" y1="278.5" y2="278.5" stroke="#f1f1f1"/><line x1="513" x2="714" y1="278.5" y2="278.5" stroke="#f1f1f1"/><line x1="717" x2="919" y1="278.5" y2="278.5" stroke="#f1f1f1"/><line x1="922" x2="1124" y1="278.5" y2="278.5" stroke="#f1f1f1"/><line x1="1127" x2="1329.6" y1="278.5" y2="278.5" stroke="#f1f1f1"/><line x1="104" x2="305" y1="272.5" y2="272.5" stroke="#f1f1f1"/><line x1="308" x2="510" y1="272.5" y2="272.5" stroke="#f1f1f1"/><line x1="513" x2="714" y1="272.5" y2="272.5" stroke="#f1f1f1"/><line x1="717" x2="919" y1="272.5" y2="272.5" stroke="#f1f1f1"/><line x1="922" x2="1124" y1="272.5" y2="272.5" stroke="#f1f1f1"/><line x1="1127" x2="1329.6" y1="272.5" y2="272.5" stroke="#f1f1f1"/><line x1="104" x2="305" y1="265.5" y2="265.5" stroke="#f1f1f1"/><line x1="308" x2="510" y1="265.5" y2="265.5" stroke="#f1f1f1"/><line x1="513" x2="714" y1="265.5" y2="265.5" stroke="#f1f1f1"/><line x1="717" x2="919" y1="265.5" y2="265.5" stroke="#f1f1f1"/><line x1="922" x2="1124" y1="265.5" y2="265.5" stroke="#f1f1f1"/><line x1="1127" x2="1329.6" y1="265.5" y2="265.5" stroke="#f1f1f1"/><line x1="104" x2="305" y1="259.5" y2="259.5" stroke="#f1f1f1"/><line x1="308" x2="510" y1="259.5" y2="259.5" stroke="#f1f1f1"/><line x1="513" x2="714" y1="259.5" y2="259.5" stroke="#f1f1f1"/><line x1="717" x2="919" y1="259.5" y2="259.5" stroke="#f1f1f1"/><line x1="922" x2="1124" y1="259.5" y2="259.5" stroke="#f1f1f1"/><line x1="1127" x2="1329.6" y1="259.5" y2="259.5" stroke="#f1f1f1"/><line x1="104" x2="305" y1="253.5" y2="253.5" stroke="#f1f1f1"/><line x1="308" x2="510" y1="253.5" y2="253.5" stroke="#f1f1f1"/><line x1="513" x2="714" y1="253.5" y2="253.5" stroke="#f1f1f1"/><line x1="717" x2="919" y1="253.5" y2="253.5" stroke="#f1f1f1"/><line x1="922" x2="1124" y1="253.5" y2="253.5" stroke="#f1f1f1"/><line x1="1127" x2="1329.6" y1="253.5" y2="253.5" stroke="#f1f1f1"/><line x1="104" x2="305" y1="247.5" y2="247.5" stroke="#f1f1f1"/><line x1="308" x2="510" y1="247.5" y2="247.5" stroke="#f1f1f1"/><line x1="513" x2="714" y1="247.5" y2="247.5" stroke="#f1f1f1"/><line x1="717" x2="919" y1="247.5" y2="247.5" stroke="#f1f1f1"/><line x1="922" x2="1124" y1="247.5" y2="247.5" stroke="#f1f1f1"/><line x1="1127" x2="1329.6" y1="247.5" y2="247.5" stroke="#f1f1f1"/><line x1="104" x2="305" y1="240.5" y2="240.5" stroke="#f1f1f1"/><line x1="308" x2="510" y1="240.5" y2="240.5" stroke="#f1f1f1"/><line x1="513" x2="714" y1="240.5" y2="240.5" stroke="#f1f1f1"/><line x1="717" x2="919" y1="240.5" y2="240.5" stroke="#f1f1f1"/><line x1="922" x2="1124" y1="240.5" y2="240.5" stroke="#f1f1f1"/><line x1="1127" x2="1329.6" y1="240.5" y2="240.5" stroke="#f1f1f1"/><line x1="104" x2="305" y1="234.5" y2="234.5" stroke="#f1f1f1"/><line x1="308" x2="510" y1="234.5" y2="234.5" stroke="#f1f1f1"/><line x1="513" x2="714" y1="234.5" y2="234.5" stroke="#f1f1f1"/><line x1="717" x2="919" y1="234.5" y2="234.5" stroke="#f1f1f1"/><line x1="922" x2="1124" y1="234.5" y2="234.5" stroke="#f1f1f1"/><line x1="1127" x2="1329.6" y1="234.5" y2="234.5" stroke="#f1f1f1"/><line x1="104" x2="305" y1="228.5" y2="228.5" stroke="#e3e3e3"/><line x1="308" x2="510" y1="228.5" y2="228.5" stroke="#e3e3e3"/><line x1="513" x2="714" y1="228.5" y2="228.5" stroke="#e3e3e3"/><line x1="717" x2="919" y1="228.5" y2="228.5" stroke="#e3e3e3"/><line x1="922" x2="1124" y1="228.5" y2="228.5" stroke="#e3e3e3"/><line x1="1127" x2="1329.6" y1="228.5" y2="228.5" stroke="#e3e3e3"/><line x1="104" x2="305" y1="221.5" y2="221.5" stroke="#f1f1f1"/><line x1="308" x2="510" y1="221.5" y2="221.5" stroke="#f1f1f1"/><line x1="513" x2="714" y1="221.5" y2="221.5" stroke="#f1f1f1"/><line x1="717" x2="919" y1="221.5" y2="221.5" stroke="#f1f1f1"/><line x1="922" x2="1124" y1="221.5" y2="221.5" stroke="#f1f1f1"/><line x1="1127" x2="1329.6" y1="221.5" y2="221.5" stroke="#f1f1f1"/><line x1="104" x2="305" y1="215.5" y2="215.5" stroke="#f1f1f1"/><line x1="308" x2="510" y1="215.5" y2="215.5" stroke="#f1f1f1"/><line x1="513" x2="714" y1="215.5" y2="215.5" stroke="#f1f1f1"/><line x1="717" x2="919" y1="215.5" y2="215.5" stroke="#f1f1f1"/><line x1="922" x2="1124" y1="215.5" y2="215.5" stroke="#f1f1f1"/><line x1="1127" x2="1329.6" y1="215.5" y2="215.5" stroke="#f1f1f1"/><line x1="104" x2="305" y1="209.5" y2="209.5" stroke="#f1f1f1"/><line x1="308" x2="510" y1="209.5" y2="209.5" stroke="#f1f1f1"/><line x1="513" x2="714" y1="209.5" y2="209.5" stroke="#f1f1f1"/><line x1="717" x2="919" y1="209.5" y2="209.5" stroke="#f1f1f1"/><line x1="922" x2="1124" y1="209.5" y2="209.5" stroke="#f1f1f1"/><line x1="1127" x2="1329.6" y1="209.5" y2="209.5" stroke="#f1f1f1"/><line x1="104" x2="305" y1="203.5" y2="203.5" stroke="#f1f1f1"/><line x1="308" x2="510" y1="203.5" y2="203.5" stroke="#f1f1f1"/><line x1="513" x2="714" y1="203.5" y2="203.5" stroke="#f1f1f1"/><line x1="717" x2="919" y1="203.5" y2="203.5" stroke="#f1f1f1"/><line x1="922" x2="1124" y1="203.5" y2="203.5" stroke="#f1f1f1"/><line x1="1127" x2="1329.6" y1="203.5" y2="203.5" stroke="#f1f1f1"/><line x1="104" x2="305" y1="196.5" y2="196.5" stroke="#f1f1f1"/><line x1="308" x2="510" y1="196.5" y2="196.5" stroke="#f1f1f1"/><line x1="513" x2="714" y1="196.5" y2="196.5" stroke="#f1f1f1"/><line x1="717" x2="919" y1="196.5" y2="196.5" stroke="#f1f1f1"/><line x1="922" x2="1124" y1="196.5" y2="196.5" stroke="#f1f1f1"/><line x1="1127" x2="1329.6" y1="196.5" y2="196.5" stroke="#f1f1f1"/><line x1="104" x2="305" y1="190.5" y2="190.5" stroke="#f1f1f1"/><line x1="308" x2="510" y1="190.5" y2="190.5" stroke="#f1f1f1"/><line x1="513" x2="714" y1="190.5" y2="190.5" stroke="#f1f1f1"/><line x1="717" x2="919" y1="190.5" y2="190.5" stroke="#f1f1f1"/><line x1="922" x2="1124" y1="190.5" y2="190.5" stroke="#f1f1f1"/><line x1="1127" x2="1329.6" y1="190.5" y2="190.5" stroke="#f1f1f1"/><line x1="104" x2="305" y1="184.5" y2="184.5" stroke="#f1f1f1"/><line x1="308" x2="510" y1="184.5" y2="184.5" stroke="#f1f1f1"/><line x1="513" x2="714" y1="184.5" y2="184.5" stroke="#f1f1f1"/><line x1="717" x2="919" y1="184.5" y2="184.5" stroke="#f1f1f1"/><line x1="922" x2="1124" y1="184.5" y2="184.5" stroke="#f1f1f1"/><line x1="1127" x2="1329.6" y1="184.5" y2="184.5" stroke="#f1f1f1"/><line x1="104" x2="305" y1="177.5" y2="177.5" stroke="#f1f1f1"/><line x1="308" x2="510" y1="177.5" y2="177.5" stroke="#f1f1f1"/><line x1="513" x2="714" y1="177.5" y2="177.5" stroke="#f1f1f1"/><line x1="717" x2="919" y1="177.5" y2="177.5" stroke="#f1f1f1"/><line x1="922" x2="1124" y1="177.5" y2="177.5" stroke="#f1f1f1"/><line x1="1127" x2="1329.6" y1="177.5" y2="177.5" stroke="#f1f1f1"/><line x1="104" x2="305" y1="171.5" y2="171.5" stroke="#f1f1f1"/><line x1="308" x2="510" y1="171.5" y2="171.5" stroke="#f1f1f1"/><line x1="513" x2="714" y1="171.5" y2="171.5" stroke="#f1f1f1"/><line x1="717" x2="919" y1="171.5" y2="171.5" stroke="#f1f1f1"/><line x1="922" x2="1124" y1="171.5" y2="171.5" stroke="#f1f1f1"/><line x1="1127" x2="1329.6" y1="171.5" y2="171.5" stroke="#f1f1f1"/><line x1="104" x2="305" y1="165.5" y2="165.5" stroke="#e3e3e3"/><line x1="308" x2="510" y1="165.5" y2="165.5" stroke="#e3e3e3"/><line x1="513" x2="714" y1="165.5" y2="165.5" stroke="#e3e3e3"/><line x1="717" x2="919" y1="165.5" y2="165.5" stroke="#e3e3e3"/><line x1="922" x2="1124" y1="165.5" y2="165.5" stroke="#e3e3e3"/><line x1="1127" x2="1329.6" y1="165.5" y2="165.5" stroke="#e3e3e3"/><line x1="104" x2="305" y1="158.5" y2="158.5" stroke="#f1f1f1"/><line x1="308" x2="510" y1="158.5" y2="158.5" stroke="#f1f1f1"/><line x1="513" x2="714" y1="158.5" y2="158.5" stroke="#f1f1f1"/><line x1="717" x2="919" y1="158.5" y2="158.5" stroke="#f1f1f1"/><line x1="922" x2="1124" y1="158.5" y2="158.5" stroke="#f1f1f1"/><line x1="1127" x2="1329.6" y1="158.5" y2="158.5" stroke="#f1f1f1"/><line x1="104" x2="305" y1="152.5" y2="152.5" stroke="#f1f1f1"/><line x1="308" x2="510" y1="152.5" y2="152.5" stroke="#f1f1f1"/><line x1="513" x2="714" y1="152.5" y2="152.5" stroke="#f1f1f1"/><line x1="717" x2="919" y1="152.5" y2="152.5" stroke="#f1f1f1"/><line x1="922" x2="1124" y1="152.5" y2="152.5" stroke="#f1f1f1"/><line x1="1127" x2="1329.6" y1="152.5" y2="152.5" stroke="#f1f1f1"/><line x1="104" x2="305" y1="146.5" y2="146.5" stroke="#f1f1f1"/><line x1="308" x2="510" y1="146.5" y2="146.5" stroke="#f1f1f1"/><line x1="513" x2="714" y1="146.5" y2="146.5" stroke="#f1f1f1"/><line x1="717" x2="919" y1="146.5" y2="146.5" stroke="#f1f1f1"/><line x1="922" x2="1124" y1="146.5" y2="146.5" stroke="#f1f1f1"/><line x1="1127" x2="1329.6" y1="146.5" y2="146.5" stroke="#f1f1f1"/><line x1="104" x2="305" y1="140.5" y2="140.5" stroke="#f1f1f1"/><line x1="308" x2="510" y1="140.5" y2="140.5" stroke="#f1f1f1"/><line x1="513" x2="714" y1="140.5" y2="140.5" stroke="#f1f1f1"/><line x1="717" x2="919" y1="140.5" y2="140.5" stroke="#f1f1f1"/><line x1="922" x2="1124" y1="140.5" y2="140.5" stroke="#f1f1f1"/><line x1="1127" x2="1329.6" y1="140.5" y2="140.5" stroke="#f1f1f1"/><line x1="104" x2="305" y1="133.5" y2="133.5" stroke="#f1f1f1"/><line x1="308" x2="510" y1="133.5" y2="133.5" stroke="#f1f1f1"/><line x1="513" x2="714" y1="133.5" y2="133.5" stroke="#f1f1f1"/><line x1="717" x2="919" y1="133.5" y2="133.5" stroke="#f1f1f1"/><line x1="922" x2="1124" y1="133.5" y2="133.5" stroke="#f1f1f1"/><line x1="1127" x2="1329.6" y1="133.5" y2="133.5" stroke="#f1f1f1"/><line x1="104" x2="305" y1="127.5" y2="127.5" stroke="#f1f1f1"/><line x1="308" x2="510" y1="127.5" y2="127.5" stroke="#f1f1f1"/><line x1="513" x2="714" y1="127.5" y2="127.5" stroke="#f1f1f1"/><line x1="717" x2="919" y1="127.5" y2="127.5" stroke="#f1f1f1"/><line x1="922" x2="1124" y1="127.5" y2="127.5" stroke="#f1f1f1"/><line x1="1127" x2="1329.6" y1="127.5" y2="127.5" stroke="#f1f1f1"/><line x1="104" x2="305" y1="121.5" y2="121.5" stroke="#f1f1f1"/><line x1="308" x2="510" y1="121.5" y2="121.5" stroke="#f1f1f1"/><line x1="513" x2="714" y1="121.5" y2="121.5" stroke="#f1f1f1"/><line x1="717" x2="919" y1="121.5" y2="121.5" stroke="#f1f1f1"/><line x1="922" x2="1124" y1="121.5" y2="121.5" stroke="#f1f1f1"/><line x1="1127" x2="1329.6" y1="121.5" y2="121.5" stroke="#f1f1f1"/><line x1="104" x2="305" y1="114.5" y2="114.5" stroke="#f1f1f1"/><line x1="308" x2="510" y1="114.5" y2="114.5" stroke="#f1f1f1"/><line x1="513" x2="714" y1="114.5" y2="114.5" stroke="#f1f1f1"/><line x1="717" x2="919" y1="114.5" y2="114.5" stroke="#f1f1f1"/><line x1="922" x2="1124" y1="114.5" y2="114.5" stroke="#f1f1f1"/><line x1="1127" x2="1329.6" y1="114.5" y2="114.5" stroke="#f1f1f1"/><line x1="104" x2="305" y1="108.5" y2="108.5" stroke="#f1f1f1"/><line x1="308" x2="510" y1="108.5" y2="108.5" stroke="#f1f1f1"/><line x1="513" x2="714" y1="108.5" y2="108.5" stroke="#f1f1f1"/><line x1="717" x2="919" y1="108.5" y2="108.5" stroke="#f1f1f1"/><line x1="922" x2="1124" y1="108.5" y2="108.5" stroke="#f1f1f1"/><line x1="1127" x2="1329.6" y1="108.5" y2="108.5" stroke="#f1f1f1"/><line x1="104" x2="305" y1="102.5" y2="102.5" stroke="#e3e3e3"/><line x1="308" x2="510" y1="102.5" y2="102.5" stroke="#e3e3e3"/><line x1="513" x2="714" y1="102.5" y2="102.5" stroke="#e3e3e3"/><line x1="717" x2="919" y1="102.5" y2="102.5" stroke="#e3e3e3"/><line x1="922" x2="1124" y1="102.5" y2="102.5" stroke="#e3e3e3"/><line x1="1127" x2="1329.6" y1="102.5" y2="102.5" stroke="#e3e3e3"/><line x1="104" x2="305" y1="96.5" y2="96.5" stroke="#f1f1f1"/><line x1="308" x2="510" y1="96.5" y2="96.5" stroke="#f1f1f1"/><line x1="513" x2="714" y1="96.5" y2="96.5" stroke="#f1f1f1"/><line x1="717" x2="919" y1="96.5" y2="96.5" stroke="#f1f1f1"/><line x1="922" x2="1124" y1="96.5" y2="96.5" stroke="#f1f1f1"/><line x1="1127" x2="1329.6" y1="96.5" y2="96.5" stroke="#f1f1f1"/><line x1="104" x2="305" y1="89.5" y2="89.5" stroke="#f1f1f1"/><line x1="308" x2="510" y1="89.5" y2="89.5" stroke="#f1f1f1"/><line x1="513" x2="714" y1="89.5" y2="89.5" stroke="#f1f1f1"/><line x1="717" x2="919" y1="89.5" y2="89.5" stroke="#f1f1f1"/><line x1="922" x2="1124" y1="89.5" y2="89.5" stroke="#f1f1f1"/><line x1="1127" x2="1329.6" y1="89.5" y2="89.5" stroke="#f1f1f1"/><line x1="104" x2="305" y1="83.5" y2="83.5" stroke="#f1f1f1"/><line x1="308" x2="510" y1="83.5" y2="83.5" stroke="#f1f1f1"/><line x1="513" x2="714" y1="83.5" y2="83.5" stroke="#f1f1f1"/><line x1="717" x2="919" y1="83.5" y2="83.5" stroke="#f1f1f1"/><line x1="922" x2="1124" y1="83.5" y2="83.5" stroke="#f1f1f1"/><line x1="1127" x2="1329.6" y1="83.5" y2="83.5" stroke="#f1f1f1"/><line x1="104" x2="305" y1="77.5" y2="77.5" stroke="#f1f1f1"/><line x1="308" x2="510" y1="77.5" y2="77.5" stroke="#f1f1f1"/><line x1="513" x2="714" y1="77.5" y2="77.5" stroke="#f1f1f1"/><line x1="717" x2="919" y1="77.5" y2="77.5" stroke="#f1f1f1"/><line x1="922" x2="1124" y1="77.5" y2="77.5" stroke="#f1f1f1"/><line x1="1127" x2="1329.6" y1="77.5" y2="77.5" stroke="#f1f1f1"/><line x1="104" x2="305" y1="70.5" y2="70.5" stroke="#f1f1f1"/><line x1="308" x2="510" y1="70.5" y2="70.5" stroke="#f1f1f1"/><line x1="513" x2="714" y1="70.5" y2="70.5" stroke="#f1f1f1"/><line x1="717" x2="919" y1="70.5" y2="70.5" stroke="#f1f1f1"/><line x1="922" x2="1124" y1="70.5" y2="70.5" stroke="#f1f1f1"/><line x1="1127" x2="1329.6" y1="70.5" y2="70.5" stroke="#f1f1f1"/><line x1="104" x2="305" y1="64.5" y2="64.5" stroke="#f1f1f1"/><line x1="308" x2="510" y1="64.5" y2="64.5" stroke="#f1f1f1"/><line x1="513" x2="714" y1="64.5" y2="64.5" stroke="#f1f1f1"/><line x1="717" x2="919" y1="64.5" y2="64.5" stroke="#f1f1f1"/><line x1="922" x2="1124" y1="64.5" y2="64.5" stroke="#f1f1f1"/><line x1="1127" x2="1329.6" y1="64.5" y2="64.5" stroke="#f1f1f1"/><line x1="104" x2="305" y1="58.5" y2="58.5" stroke="#f1f1f1"/><line x1="308" x2="510" y1="58.5" y2="58.5" stroke="#f1f1f1"/><line x1="513" x2="714" y1="58.5" y2="58.5" stroke="#f1f1f1"/><line x1="717" x2="919" y1="58.5" y2="58.5" stroke="#f1f1f1"/><line x1="922" x2="1124" y1="58.5" y2="58.5" stroke="#f1f1f1"/><line x1="1127" x2="1329.6" y1="58.5" y2="58.5" stroke="#f1f1f1"/><line x1="104" x2="305" y1="52.5" y2="52.5" stroke="#f1f1f1"/><line x1="308" x2="510" y1="52.5" y2="52.5" stroke="#f1f1f1"/><line x1="513" x2="714" y1="52.5" y2="52.5" stroke="#f1f1f1"/><line x1="717" x2="919" y1="52.5" y2="52.5" stroke="#f1f1f1"/><line x1="922" x2="1124" y1="52.5" y2="52.5" stroke="#f1f1f1"/><line x1="1127" x2="1329.6" y1="52.5" y2="52.5" stroke="#f1f1f1"/><line x1="104" x2="305" y1="45.5" y2="45.5" stroke="#f1f1f1"/><line x1="308" x2="510" y1="45.5" y2="45.5" stroke="#f1f1f1"/><line x1="513" x2="714" y1="45.5" y2="45.5" stroke="#f1f1f1"/><line x1="717" x2="919" y1="45.5" y2="45.5" stroke="#f1f1f1"/><line x1="922" x2="1124" y1="45.5" y2="45.5" stroke="#f1f1f1"/><line x1="1127" x2="1329.6" y1="45.5" y2="45.5" stroke="#f1f1f1"/><line x1="143.5" x2="143.5" y1="39" y2="668" stroke="#f3f3f3"/><line x1="184.5" x2="184.5" y1="39" y2="668" stroke="#f3f3f3"/><line x1="224.5" x2="224.5" y1="39" y2="668" stroke="#f3f3f3"/><line x1="265.5" x2="265.5" y1="39" y2="668" stroke="#f3f3f3"/><line x1="347.5" x2="347.5" y1="39" y2="668" stroke="#f3f3f3"/><line x1="388.5" x2="388.5" y1="39" y2="668" stroke="#f3f3f3"/><line x1="428.5" x2="428.5" y1="39" y2="668" stroke="#f3f3f3"/><line x1="469.5" x2="469.5" y1="39" y2="668" stroke="#f3f3f3"/><line x1="552.5" x2="552.5" y1="39" y2="668" stroke="#f3f3f3"/><line x1="593.5" x2="593.5" y1="39" y2="668" stroke="#f3f3f3"/><line x1="633.5" x2="633.5" y1="39" y2="668" stroke="#f3f3f3"/><line x1="674.5" x2="674.5" y1="39" y2="668" stroke="#f3f3f3"/><line x1="756.5" x2="756.5" y1="39" y2="668" stroke="#f3f3f3"/><line x1="797.5" x2="797.5" y1="39" y2="668" stroke="#f3f3f3"/><line x1="837.5" x2="837.5" y1="39" y2="668" stroke="#f3f3f3"/><line x1="878.5" x2="878.5" y1="39" y2="668" stroke="#f3f3f3"/><line x1="961.5" x2="961.5" y1="39" y2="668" stroke="#f3f3f3"/><line x1="1002.5" x2="1002.5" y1="39" y2="668" stroke="#f3f3f3"/><line x1="1042.5" x2="1042.5" y1="39" y2="668" stroke="#f3f3f3"/><line x1="1083.5" x2="1083.5" y1="39" y2="668" stroke="#f3f3f3"/><line x1="1166.5" x2="1166.5" y1="39" y2="668" stroke="#f3f3f3"/><line x1="1207.5" x2="1207.5" y1="39" y2="668" stroke="#f3f3f3"/><line x1="1247.5" x2="1247.5" y1="39" y2="668" stroke="#f3f3f3"/><line x1="1288.5" x2="1288.5" y1="39" y2="668" stroke="#f3f3f3"/></g>
<rect x="102" y="37" width="1227.6" height="1" fill="#ededed"/><rect x="102" y="38" width="1227.6" height="1.05" fill="#6a6a6a"/><rect x="101.95" y="38" width="1.15" height="630.5" fill="#6a6a6a"/><rect x="305.95" y="38" width="1.15" height="630.5" fill="#6a6a6a"/><rect x="510.95" y="38" width="1.15" height="630.5" fill="#6a6a6a"/><rect x="714.95" y="38" width="1.15" height="630.5" fill="#6a6a6a"/><rect x="919.95" y="38" width="1.15" height="630.5" fill="#6a6a6a"/><rect x="1124.95" y="38" width="1.15" height="630.5" fill="#6a6a6a"/><line x1="105.8" x2="1329.5" y1="668.5" y2="668.5" stroke="#000" stroke-width="1.1" stroke-dasharray="9 3 3 3 3 3"/>
<path d="M188.5 102.5V195.5h1V382.5h1V569.5h1V662.5H197.5" fill="none" stroke="#1580d5" stroke-width="1.15"/><path d="M103 102.5H194.5V195.5h1V382.5h1V569.5h1V662.5H226" fill="none" stroke="#ff00ff" stroke-width="1.15"/><path d="M396.5 102.5V195.5h1V382.5h1V569.5h1V660.4H407.5" fill="none" stroke="#1580d5" stroke-width="1.15"/><path d="M307 102.5H404.5V195.5h1V382.5h1V569.5h1V660.4H432.3" fill="none" stroke="#ff00ff" stroke-width="1.15"/><path d="M594.5 102.5V195.5h1V382.5h1V569.5h1V660.4H612.5" fill="none" stroke="#1580d5" stroke-width="1.15"/><path d="M512 102.5H609.5V195.5h1V382.5h1V569.5h1V660.4H632.9" fill="none" stroke="#ff00ff" stroke-width="1.15"/><path d="M802.5 102.5V195.5h1V382.5h1V569.5h1V659.6H813.5" fill="none" stroke="#1580d5" stroke-width="1.15"/><path d="M716 102.5H810.5V195.5h1V382.5h1V569.5h1V659.6H839.5" fill="none" stroke="#ff00ff" stroke-width="1.15"/><path d="M1017.5 102.5V195.5h1V382.5h1V569.5h1V658.7H1038.5" fill="none" stroke="#1580d5" stroke-width="1.15"/><path d="M921 102.5H1035.5V195.5h1V382.5h1V569.5h1V658.7H1050" fill="none" stroke="#ff00ff" stroke-width="1.15"/><path d="M1218.5 102.5V195.5h1V382.5h1V569.5h1V658.7H1237.5" fill="none" stroke="#1580d5" stroke-width="1.15"/><path d="M1126 102.5H1234.5V195.5h1V382.5h1V569.5h1V658.7H1254.5" fill="none" stroke="#ff00ff" stroke-width="1.15"/><path d="M104.5 661.5L104.5 648.0C104.6 645.5 104.1 641.1 105.3 633.0C106.5 624.9 109.1 611.7 111.6 599.3C114.0 586.9 117.6 569.6 120.0 558.6C122.4 547.6 124.0 540.3 126.0 533.5C128.0 526.7 129.9 521.7 131.9 517.9C133.9 514.1 136.2 512.1 137.9 510.7C139.6 509.3 140.4 509.1 142.0 509.5C143.6 509.9 145.6 510.1 147.5 513.1C149.4 516.1 151.5 521.9 153.5 527.5C155.5 533.1 157.5 540.4 159.5 546.6C161.5 552.8 163.5 559.2 165.5 564.6C167.5 570.0 169.5 574.8 171.5 579.0C173.5 583.2 175.5 587.4 177.4 589.8C179.3 592.2 181.1 593.4 182.7 593.4C184.3 593.4 185.7 591.8 187.0 589.8C188.3 587.8 189.0 585.4 190.6 581.4C192.2 577.4 194.6 572.4 196.6 565.8C198.6 559.2 200.5 551.1 202.4 541.9C204.3 532.7 206.5 519.5 207.9 510.7C209.4 501.9 210.1 496.6 211.2 489.0C212.2 481.4 213.1 474.3 214.2 465.2C215.2 456.1 216.5 443.7 217.4 434.1C218.3 424.5 219.1 415.4 219.7 407.8C220.4 400.2 220.8 394.6 221.3 388.6C221.7 382.6 222.1 377.9 222.6 371.8C223.1 365.7 223.6 359.2 224.2 352.0C224.8 344.8 225.8 332.2 226.2 328.3" fill="none" stroke="#000" stroke-width="1.1"/><path d="M103.5 668.8L103.5 650.8C104.5 647.8 107.0 642.3 109.2 632.9C111.4 623.5 114.0 608.1 116.4 594.5C118.8 580.9 121.6 562.8 123.6 551.4C125.6 540.0 126.7 534.3 128.3 526.3C129.9 518.3 131.5 509.5 133.1 503.5C134.7 497.5 135.9 494.0 137.9 490.4C139.9 486.8 143.1 482.9 145.1 482.0C147.1 481.1 148.1 482.0 149.9 484.8C151.7 487.6 153.9 493.6 155.9 498.7C157.9 503.8 159.9 509.9 161.9 515.5C163.9 521.1 165.9 527.5 167.9 532.3C169.9 537.1 172.0 541.5 173.9 544.3C175.8 547.1 177.1 548.8 179.1 549.0C181.1 549.2 183.7 547.8 185.8 545.4C187.9 543.0 190.0 539.0 191.8 534.7C193.6 530.4 194.8 525.6 196.6 519.6C198.4 513.6 200.3 507.8 202.4 498.7C204.5 489.6 207.4 474.4 209.2 465.2C210.9 456.0 211.5 452.5 212.8 443.7C214.2 434.9 215.9 422.9 217.2 412.5C218.5 402.1 219.7 391.0 220.7 381.4C221.8 371.8 222.6 362.6 223.4 355.0C224.1 347.4 224.7 340.3 225.2 335.9C225.6 331.4 225.8 329.6 225.9 328.3" fill="none" stroke="#f00" stroke-width="1.1"/><path d="M308.5 661.5L308.5 648.0C309.4 644.0 311.7 634.1 313.9 623.9C316.1 613.7 319.2 599.1 321.8 587.0C324.4 574.9 327.1 562.8 329.7 551.4C332.3 540.0 335.4 526.0 337.6 518.5C339.8 511.1 341.0 509.7 342.9 506.7C344.8 503.7 347.0 501.1 349.0 500.6C351.0 500.2 352.6 501.0 354.7 504.0C356.8 507.0 359.1 512.1 361.3 518.5C363.5 524.9 365.7 534.7 367.9 542.2C370.1 549.7 372.3 557.4 374.5 563.3C376.7 569.2 379.1 574.3 381.1 577.8C383.1 581.3 384.9 583.0 386.4 584.4C387.8 585.8 388.5 586.4 389.8 586.2C391.1 586.0 392.8 584.6 394.3 583.1C395.8 581.6 397.1 581.2 398.8 577.0C400.6 572.8 402.7 566.0 404.8 558.0C406.9 550.0 409.2 540.0 411.5 529.0C413.7 518.0 416.6 502.2 418.3 492.2C420.0 482.2 420.5 477.5 421.7 468.8C422.8 460.1 424.1 449.2 425.1 440.0C426.1 430.8 427.0 421.3 427.7 413.7C428.4 406.1 428.9 399.9 429.4 394.6C429.8 389.3 430.2 384.2 430.4 382.1" fill="none" stroke="#000" stroke-width="1.1"/><path d="M307.5 668.8L307.5 649.0C308.6 646.1 311.5 640.8 313.9 631.8C316.3 622.8 319.2 607.6 321.8 594.9C324.4 582.2 327.1 568.6 329.7 555.4C332.3 542.2 335.2 526.9 337.6 515.9C340.0 504.9 342.2 496.1 344.2 489.5C346.2 482.9 347.8 479.5 349.5 476.4C351.2 473.3 352.9 471.3 354.7 471.1C356.4 470.9 358.0 471.9 360.0 475.0C362.0 478.1 364.4 483.8 366.6 489.5C368.8 495.2 371.0 503.2 373.2 509.3C375.4 515.5 377.8 522.1 379.8 526.4C381.8 530.6 383.5 532.8 385.1 534.8C386.7 536.8 387.8 538.8 389.5 538.3C391.2 537.8 393.7 534.8 395.6 531.7C397.5 528.6 399.0 524.6 400.9 519.8C402.8 515.0 404.8 509.5 406.7 502.7C408.6 495.9 411.1 485.4 412.5 479.0C413.9 472.6 414.4 468.9 415.4 464.0C416.3 459.1 417.2 454.3 418.0 449.5C418.9 444.7 419.2 442.9 420.4 435.3C421.6 427.7 423.6 414.1 425.0 404.1C426.4 394.1 427.5 384.4 428.7 375.4C429.8 366.4 431.1 354.4 431.6 350.2" fill="none" stroke="#f00" stroke-width="1.1"/><path d="M513.5 661.5L513.5 645.0C514.4 639.7 516.7 625.5 518.9 613.4C521.1 601.3 524.2 584.6 526.8 572.5C529.4 560.4 532.3 549.2 534.7 540.9C537.1 532.6 539.2 526.3 541.3 522.5C543.4 518.7 545.4 518.2 547.4 518.0C549.4 517.8 551.2 518.4 553.2 521.1C555.2 523.8 557.5 529.0 559.7 534.3C561.9 539.6 564.1 546.6 566.3 552.8C568.5 558.9 570.7 565.5 572.9 571.2C575.1 576.9 577.3 582.6 579.5 587.0C581.7 591.4 584.2 595.3 586.1 597.6C588.0 599.9 588.9 601.5 590.6 601.0C592.4 600.5 594.7 598.5 596.6 594.9C598.5 591.2 600.1 585.2 601.9 579.1C603.7 573.0 605.7 564.6 607.2 558.0C608.7 551.4 609.3 548.8 610.9 539.6C612.5 530.4 615.0 513.7 616.6 502.7C618.2 491.7 619.4 482.7 620.5 473.7C621.7 464.7 622.5 458.1 623.6 448.8C624.7 439.5 626.0 427.3 627.0 417.7C628.1 408.1 629.0 398.7 629.8 391.3C630.5 383.9 631.3 376.4 631.6 373.4" fill="none" stroke="#000" stroke-width="1.1"/><path d="M512.5 668.8L512.5 647.6C513.6 644.1 516.5 637.5 518.9 626.5C521.3 615.5 524.2 595.8 526.8 581.8C529.4 567.8 532.3 553.6 534.7 542.2C537.1 530.8 539.3 520.5 541.3 513.2C543.3 506.0 544.9 502.1 546.6 498.7C548.4 495.3 550.0 493.2 551.8 493.0C553.5 492.8 555.1 493.8 557.1 497.4C559.1 501.0 561.5 508.5 563.7 514.6C565.9 520.8 568.1 528.4 570.3 534.3C572.5 540.2 574.9 546.1 576.9 550.1C578.9 554.1 580.6 556.3 582.1 558.0C583.6 559.7 584.6 560.3 586.1 560.1C587.6 559.9 589.4 559.0 591.4 556.7C593.4 554.4 595.8 551.0 598.0 546.2C600.2 541.4 602.3 534.8 604.5 527.7C606.7 520.6 609.5 511.6 611.5 503.5C613.5 495.4 614.9 488.0 616.6 479.0C618.2 470.0 620.1 458.9 621.5 449.5C622.9 440.1 624.0 431.4 625.1 422.5C626.1 413.6 627.1 404.5 628.0 396.1C629.0 387.7 629.8 379.4 630.6 372.2C631.4 365.0 632.5 356.2 632.8 353.0" fill="none" stroke="#f00" stroke-width="1.1"/><path d="M717.5 661.5L717.5 645.0C718.4 640.2 720.7 627.9 722.9 616.0C725.1 604.1 728.2 585.4 730.8 573.8C733.4 562.2 736.1 553.9 738.7 546.2C741.3 538.5 744.0 531.8 746.6 527.7C749.2 523.6 752.1 521.9 754.5 521.7C756.9 521.5 758.9 523.4 761.1 526.4C763.3 529.4 765.5 534.8 767.7 539.6C769.9 544.4 772.1 550.1 774.3 555.4C776.5 560.7 778.7 566.4 780.9 571.2C783.1 576.0 785.1 580.9 787.5 584.4C789.9 587.9 793.2 591.6 795.4 592.3C797.6 592.9 799.1 590.5 800.6 588.3C802.1 586.1 803.1 583.7 804.6 579.1C806.1 574.5 808.2 567.7 809.9 560.7C811.6 553.7 813.2 545.8 815.0 537.0C816.8 528.2 818.7 518.1 820.6 508.0C822.4 497.9 824.5 485.2 825.9 476.4C827.4 467.6 828.0 463.2 829.1 455.0C830.2 446.8 831.5 437.1 832.6 427.2C833.7 417.3 834.8 405.8 835.6 395.5C836.4 385.2 837.2 370.3 837.5 365.3" fill="none" stroke="#000" stroke-width="1.1"/><path d="M716.5 668.8L716.5 647.6C717.6 644.1 720.5 637.9 722.9 626.5C725.3 615.1 728.2 594.0 730.8 579.1C733.4 564.2 736.3 548.6 738.7 537.0C741.1 525.4 743.3 516.3 745.3 509.3C747.3 502.3 748.9 498.1 750.6 494.8C752.4 491.5 754.0 489.7 755.8 489.5C757.5 489.3 759.1 490.2 761.1 493.5C763.1 496.8 765.5 503.6 767.7 509.3C769.9 515.0 772.1 522.4 774.3 527.7C776.5 533.0 778.7 537.6 780.9 540.9C783.1 544.2 785.6 546.2 787.5 547.5C789.4 548.8 790.5 549.2 792.2 548.8C794.0 548.4 795.9 547.8 798.0 544.9C800.1 542.0 802.2 538.1 804.6 531.7C807.0 525.3 810.1 515.5 812.5 506.7C814.9 497.9 817.1 488.1 819.0 479.0C821.0 469.9 822.5 461.6 824.2 452.0C825.8 442.4 827.6 431.8 829.1 421.4C830.6 411.0 832.0 400.4 833.2 389.8C834.5 379.2 835.5 369.4 836.6 358.1C837.6 346.8 839.1 328.2 839.7 322.2" fill="none" stroke="#f00" stroke-width="1.1"/><path d="M922.5 661.5L922.5 652.2C923.7 650.6 926.9 647.4 929.7 642.5C932.5 637.6 936.2 630.4 939.4 623.1C942.6 615.8 945.9 607.8 949.1 598.9C952.3 590.0 955.6 579.2 958.8 569.8C962.0 560.4 965.5 549.8 968.5 542.3C971.5 534.8 973.9 529.1 976.6 524.5C979.3 519.9 982.6 515.9 984.7 514.8C986.9 513.7 987.6 515.0 989.5 518.0C991.4 521.0 993.8 526.7 996.0 532.6C998.2 538.5 1000.4 547.1 1002.5 553.6C1004.6 560.1 1007.0 567.5 1008.9 571.4C1010.8 575.3 1012.0 577.1 1013.8 577.2C1015.6 577.3 1017.7 574.6 1019.6 572.0C1021.5 569.4 1023.1 566.7 1025.1 561.7C1027.1 556.8 1029.9 548.8 1031.6 542.3C1033.3 535.8 1034.3 530.4 1035.5 522.9C1036.8 515.4 1037.8 506.7 1038.9 497.0C1040.1 487.3 1041.3 477.5 1042.5 464.7C1043.7 451.9 1045.0 436.0 1046.1 420.0C1047.1 404.0 1048.0 385.9 1048.9 368.5C1049.8 351.1 1050.7 331.4 1051.5 315.8C1052.3 300.2 1053.3 284.5 1053.9 275.1C1054.5 265.7 1054.9 262.1 1055.1 259.5" fill="none" stroke="#000" stroke-width="1.1"/><path d="M921.5 668.8L921.5 652.2C922.9 650.3 926.7 646.3 929.7 640.9C932.7 635.5 936.2 628.2 939.4 619.9C942.6 611.5 945.9 601.6 949.1 590.8C952.3 580.0 955.6 567.6 958.8 555.2C962.0 542.8 965.3 529.1 968.5 516.4C971.7 503.7 975.2 490.0 978.2 479.2C981.2 468.4 984.0 458.3 986.3 451.7C988.6 445.1 990.3 441.9 991.8 439.4C993.2 436.9 993.8 436.1 995.0 436.5C996.2 436.9 997.4 437.6 999.2 442.0C1001.0 446.4 1003.5 455.3 1005.7 463.1C1007.9 470.9 1010.1 481.1 1012.2 488.9C1014.4 496.7 1016.8 504.9 1018.6 509.9C1020.4 514.9 1021.6 517.0 1022.8 519.0C1024.0 521.0 1024.5 522.0 1025.7 521.6C1026.9 521.2 1028.4 519.1 1029.9 516.4C1031.4 513.6 1033.5 508.3 1034.8 505.1C1036.1 501.9 1037.0 501.1 1038.0 497.0C1039.0 492.9 1039.9 488.9 1041.0 480.8C1042.2 472.7 1043.7 459.1 1044.8 448.5C1045.9 437.9 1046.7 431.6 1047.8 417.5C1048.9 403.4 1050.4 379.8 1051.4 363.7C1052.5 347.6 1053.2 332.4 1053.9 320.6C1054.6 308.8 1055.3 297.6 1055.6 293.0" fill="none" stroke="#f00" stroke-width="1.1"/><path d="M1127.5 661.5L1127.5 645.7C1128.4 642.8 1130.8 634.5 1133.1 628.0C1135.4 621.5 1138.2 614.7 1141.2 606.9C1144.2 599.1 1147.7 590.2 1150.9 581.1C1154.1 572.0 1157.4 561.2 1160.6 552.0C1163.8 542.8 1167.6 532.6 1170.3 526.1C1173.0 519.6 1175.0 515.7 1176.7 513.2C1178.4 510.7 1179.0 510.4 1180.6 510.9C1182.2 511.4 1184.4 512.8 1186.4 516.4C1188.5 520.0 1190.5 525.6 1192.9 532.6C1195.3 539.6 1198.6 551.4 1201.0 558.4C1203.4 565.4 1205.2 570.5 1207.5 574.6C1209.8 578.7 1212.3 582.2 1214.6 582.7C1216.8 583.2 1218.7 581.3 1221.0 577.8C1223.3 574.3 1226.2 567.1 1228.5 561.7C1230.8 556.3 1233.0 552.0 1234.9 545.5C1236.8 539.0 1238.2 531.5 1239.7 522.9C1241.2 514.3 1242.6 504.6 1243.9 493.8C1245.2 483.0 1246.4 470.7 1247.4 458.2C1248.4 445.7 1249.1 432.6 1249.7 418.8C1250.4 405.1 1250.9 389.7 1251.4 375.7C1252.0 361.7 1252.6 345.8 1253.1 335.0C1253.6 324.2 1254.1 317.5 1254.5 311.0C1255.0 304.5 1255.5 298.7 1255.7 296.2" fill="none" stroke="#000" stroke-width="1.1"/><path d="M1126.5 668.8L1126.5 650.6C1127.6 648.2 1130.6 642.7 1133.1 636.0C1135.5 629.3 1138.2 620.2 1141.2 610.2C1144.2 600.2 1147.7 588.3 1150.9 576.2C1154.1 564.1 1157.4 550.3 1160.6 537.4C1163.8 524.5 1167.3 509.9 1170.3 498.6C1173.3 487.3 1176.0 477.0 1178.4 469.5C1180.8 462.0 1182.7 457.2 1184.8 453.4C1186.9 449.6 1189.4 446.9 1191.3 446.9C1193.2 446.9 1194.2 448.8 1196.1 453.4C1198.0 458.0 1200.4 466.6 1202.6 474.4C1204.8 482.2 1206.9 492.1 1209.1 500.2C1211.2 508.3 1213.3 517.4 1215.5 522.9C1217.7 528.4 1219.8 532.7 1222.0 533.5C1224.2 534.3 1226.1 531.1 1228.5 527.7C1230.9 524.3 1234.2 518.9 1236.6 513.2C1239.0 507.6 1241.2 500.8 1243.0 493.8C1244.8 486.8 1246.3 480.6 1247.7 471.1C1249.1 461.6 1250.6 446.0 1251.5 437.0C1252.4 428.0 1252.4 427.2 1252.9 417.0C1253.4 406.8 1254.0 389.4 1254.6 375.7C1255.1 362.0 1255.6 345.5 1256.1 335.0C1256.6 324.5 1257.4 316.6 1257.6 312.9" fill="none" stroke="#f00" stroke-width="1.1"/><path d="M142.5 482.5h6M145.5 479v7M176.5 549.5h6M179.5 546v7M137.5 510.5h6M140.5 507v7M179.5 593.5h6M182.5 590v7M216.5 370.5h6M219.5 367v7M193.5 519.5h6M196.5 516v7M188.5 580.5h6M191.5 577v7M351.5 471.5h6M354.5 468v7M386.5 537.5h6M389.5 534v7M345.5 500.5h6M348.5 497v7M386.5 586.5h6M389.5 583v7M420.5 289.5h6M423.5 286v7M403.5 503.5h6M406.5 500v7M395.5 577.5h6M398.5 574v7M548.5 493.5h6M551.5 490v7M582.5 560.5h6M585.5 557v7M543.5 517.5h6M546.5 514v7M587.5 600.5h6M590.5 597v7M614.5 269.5h6M617.5 266v7M608.5 502.5h6M611.5 499v7M593.5 595.5h6M596.5 592v7M752.5 490.5h6M755.5 487v7M789.5 548.5h6M792.5 545v7M751.5 522.5h6M754.5 519v7M792.5 591.5h6M795.5 588v7M815.5 233.5h6M818.5 230v7M809.5 507.5h6M812.5 504v7M801.5 579.5h6M804.5 576v7M991.5 437.5h6M994.5 434v7M1023.5 521.5h6M1026.5 518v7M981.5 515.5h6M984.5 512v7M1010.5 577.5h6M1013.5 574v7M1052.5 234.5h6M1055.5 231v7M1034.5 497.5h6M1037.5 494v7M1016.5 572.5h6M1019.5 569v7M1188.5 446.5h6M1191.5 443v7M1219.5 534.5h6M1222.5 531v7M1176.5 510.5h6M1179.5 507v7M1211.5 583.5h6M1214.5 580v7M1245.5 233.5h6M1248.5 230v7M1234.5 513.5h6M1237.5 510v7M1217.5 578.5h6M1220.5 575v7" fill="none" stroke="#000" stroke-width="1" shape-rendering="crispEdges"/>
<defs><radialGradient id="led" cx="0.36" cy="0.32" r="0.8"><stop offset="0" stop-color="#b0ff88"/><stop offset="0.18" stop-color="#66f91e"/><stop offset="0.7" stop-color="#58f012"/><stop offset="1" stop-color="#3cae0e"/></radialGradient><radialGradient id="ledsh"><stop offset="0.66" stop-color="#9a9aa0" stop-opacity="0.7"/><stop offset="1" stop-color="#c8c8c8" stop-opacity="0"/></radialGradient><radialGradient id="ledw"><stop offset="0.8" stop-color="#fff"/><stop offset="1" stop-color="#fff" stop-opacity="0"/></radialGradient><clipPath id="clipR"><rect x="1200" y="36" width="129.6" height="640"/></clipPath></defs><text x="149.2" y="54.85" word-spacing="1.2" letter-spacing="0.08">NO : 7-187</text><text transform="translate(240.5 79.85) scale(1.1 1)" text-anchor="end">gf</text><text transform="translate(301.9 79.85) scale(1.03 1)" text-anchor="end">mm</text><text transform="translate(177 97.85) scale(0.88 1)" text-anchor="end">F1</text><text transform="translate(238.5 97.85) scale(0.95 1)" text-anchor="end">59.43</text><text transform="translate(301.4 99.85) scale(0.95 1)" text-anchor="end">0.425</text><text transform="translate(177 115.85) scale(0.88 1)" text-anchor="end">F2</text><text transform="translate(238.5 115.85) scale(0.95 1)" text-anchor="end">38.02</text><text transform="translate(301.4 117.85) scale(0.95 1)" text-anchor="end">0.764</text><text transform="translate(177 133.85) scale(0.88 1)" text-anchor="end">F3</text><text transform="translate(238.5 133.85) scale(0.95 1)" text-anchor="end">50.54</text><text transform="translate(301.4 135.85) scale(0.95 1)" text-anchor="end">0.385</text><text transform="translate(177 151.85) scale(1.1 1)" text-anchor="end">rbt</text><text transform="translate(238.5 151.85) scale(0.95 1)" text-anchor="end">24.20</text><text transform="translate(301.4 153.85) scale(0.95 1)" text-anchor="end">0.788</text><text transform="translate(177 169.85) scale(0.95 1)" text-anchor="end">Rmin</text><text transform="translate(238.5 169.85) scale(0.95 1)" text-anchor="end">95.07</text><text transform="translate(301.4 171.85) scale(0.95 1)" text-anchor="end">1.158</text><text x="177" y="187.85" text-anchor="end">Ron/D1</text><text transform="translate(238.5 187.85) scale(0.95 1)" text-anchor="end">47.75</text><text transform="translate(301.4 189.85) scale(0.95 1)" text-anchor="end">0.933</text><text transform="translate(177 205.85) scale(0.8 1)" text-anchor="end">RF</text><text transform="translate(238.5 205.85) scale(0.95 1)" text-anchor="end">0.00</text><text transform="translate(301.4 207.85) scale(0.95 1)" text-anchor="end">0.508</text><text transform="translate(177 223.85) scale(0.92 1)" text-anchor="end">NF</text><text transform="translate(238.5 223.85) scale(0.95 1)" text-anchor="end">0.00</text><text transform="translate(301.4 225.85) scale(0.95 1)" text-anchor="end">0.490</text><text x="177" y="241.85" text-anchor="end">Roff/D1</text><text transform="translate(238.5 241.85) scale(0.95 1)" text-anchor="end">28.05</text><text transform="translate(301.4 243.85) scale(0.95 1)" text-anchor="end">0.875</text><text x="177" y="261.85" text-anchor="end">ck</text><text transform="translate(238.5 261.85) scale(0.95 1)" text-anchor="end">21.41</text><text transform="translate(301.4 261.85) scale(0.95 1)" text-anchor="end">36.025%</text><text x="231.7" y="664.85">[mm]</text><text transform="translate(300.2 664.85) scale(0.95 1)" text-anchor="end">2.0</text><circle cx="265.6" cy="50.3" r="10" fill="url(#ledw)"/><circle cx="264.9" cy="50" r="8.8" fill="url(#ledsh)"/><circle cx="265.6" cy="50.6" r="6.1" fill="url(#led)"/><text x="358.3" y="54.85" word-spacing="1.2" letter-spacing="0.08">NO : 7-188</text><text transform="translate(446.2 79.85) scale(1.1 1)" text-anchor="end">gf</text><text transform="translate(507.9 79.85) scale(1.03 1)" text-anchor="end">mm</text><text transform="translate(382.2 99.85) scale(0.88 1)" text-anchor="end">F1</text><text transform="translate(444.2 99.85) scale(0.95 1)" text-anchor="end">63.02</text><text transform="translate(507.4 99.85) scale(0.95 1)" text-anchor="end">0.480</text><text transform="translate(382.2 117.85) scale(0.88 1)" text-anchor="end">F2</text><text transform="translate(444.2 117.85) scale(0.95 1)" text-anchor="end">41.73</text><text transform="translate(507.4 117.85) scale(0.95 1)" text-anchor="end">0.818</text><text transform="translate(382.2 135.85) scale(0.88 1)" text-anchor="end">F3</text><text transform="translate(444.2 135.85) scale(0.95 1)" text-anchor="end">53.51</text><text transform="translate(507.4 135.85) scale(0.95 1)" text-anchor="end">0.417</text><text transform="translate(382.2 153.85) scale(1.1 1)" text-anchor="end">rbt</text><text transform="translate(444.2 153.85) scale(0.95 1)" text-anchor="end">26.37</text><text transform="translate(507.4 153.85) scale(0.95 1)" text-anchor="end">0.821</text><text transform="translate(382.2 171.85) scale(0.95 1)" text-anchor="end">Rmin</text><text transform="translate(444.2 171.85) scale(0.95 1)" text-anchor="end">120.89</text><text transform="translate(507.4 171.85) scale(0.95 1)" text-anchor="end">1.155</text><text x="382.2" y="189.85" text-anchor="end">Ron/D1</text><text transform="translate(444.2 189.85) scale(0.95 1)" text-anchor="end">52.84</text><text transform="translate(507.4 189.85) scale(0.95 1)" text-anchor="end">0.987</text><text transform="translate(382.2 207.85) scale(0.8 1)" text-anchor="end">RF</text><text transform="translate(444.2 207.85) scale(0.95 1)" text-anchor="end">0.00</text><text transform="translate(507.4 207.85) scale(0.95 1)" text-anchor="end">0.508</text><text transform="translate(382.2 225.85) scale(0.92 1)" text-anchor="end">NF</text><text transform="translate(444.2 225.85) scale(0.95 1)" text-anchor="end">0.00</text><text transform="translate(507.4 225.85) scale(0.95 1)" text-anchor="end">0.490</text><text x="382.2" y="243.85" text-anchor="end">Roff/D1</text><text transform="translate(444.2 243.85) scale(0.95 1)" text-anchor="end">29.23</text><text transform="translate(507.4 243.85) scale(0.95 1)" text-anchor="end">0.907</text><text x="382.2" y="261.85" text-anchor="end">ck</text><text transform="translate(444.2 261.85) scale(0.95 1)" text-anchor="end">21.29</text><text transform="translate(507.4 261.85) scale(0.95 1)" text-anchor="end">33.784%</text><text x="432.7" y="664.85">[mm]</text><text transform="translate(505 664.85) scale(0.95 1)" text-anchor="end">2.0</text><circle cx="469.7" cy="50.5" r="10" fill="url(#ledw)"/><circle cx="469" cy="50.2" r="8.8" fill="url(#ledsh)"/><circle cx="469.7" cy="50.8" r="6.1" fill="url(#led)"/><text x="562.6" y="54.85" word-spacing="1.2" letter-spacing="0.08">NO : 7-189</text><text transform="translate(650.4 79.85) scale(1.1 1)" text-anchor="end">gf</text><text transform="translate(711.8 79.85) scale(1.03 1)" text-anchor="end">mm</text><text transform="translate(586.6 99.85) scale(0.88 1)" text-anchor="end">F1</text><text transform="translate(648.4 99.85) scale(0.95 1)" text-anchor="end">56.03</text><text transform="translate(711.3 99.85) scale(0.95 1)" text-anchor="end">0.396</text><text transform="translate(586.6 117.85) scale(0.88 1)" text-anchor="end">F2</text><text transform="translate(648.4 117.85) scale(0.95 1)" text-anchor="end">34.68</text><text transform="translate(711.3 117.85) scale(0.95 1)" text-anchor="end">0.735</text><text transform="translate(586.6 135.85) scale(0.88 1)" text-anchor="end">F3</text><text transform="translate(648.4 135.85) scale(0.95 1)" text-anchor="end">48.11</text><text transform="translate(711.3 135.85) scale(0.95 1)" text-anchor="end">0.348</text><text transform="translate(586.6 153.85) scale(1.1 1)" text-anchor="end">rbt</text><text transform="translate(648.4 153.85) scale(0.95 1)" text-anchor="end">21.72</text><text transform="translate(711.3 153.85) scale(0.95 1)" text-anchor="end">0.780</text><text transform="translate(586.6 171.85) scale(0.95 1)" text-anchor="end">Rmin</text><text transform="translate(648.4 171.85) scale(0.95 1)" text-anchor="end">127.10</text><text transform="translate(711.3 171.85) scale(0.95 1)" text-anchor="end">1.044</text><text x="586.6" y="189.85" text-anchor="end">Ron/D1</text><text transform="translate(648.4 189.85) scale(0.95 1)" text-anchor="end">52.88</text><text transform="translate(711.3 189.85) scale(0.95 1)" text-anchor="end">0.988</text><text transform="translate(586.6 207.85) scale(0.8 1)" text-anchor="end">RF</text><text transform="translate(648.4 207.85) scale(0.95 1)" text-anchor="end">0.00</text><text transform="translate(711.3 207.85) scale(0.95 1)" text-anchor="end">0.593</text><text transform="translate(586.6 225.85) scale(0.92 1)" text-anchor="end">NF</text><text transform="translate(648.4 225.85) scale(0.95 1)" text-anchor="end">0.00</text><text transform="translate(711.3 225.85) scale(0.95 1)" text-anchor="end">0.490</text><text x="586.6" y="243.85" text-anchor="end">Roff/D1</text><text transform="translate(648.4 243.85) scale(0.95 1)" text-anchor="end">23.51</text><text transform="translate(711.3 243.85) scale(0.95 1)" text-anchor="end">0.838</text><text x="586.6" y="261.85" text-anchor="end">ck</text><text transform="translate(648.4 261.85) scale(0.95 1)" text-anchor="end">21.35</text><text transform="translate(711.3 261.85) scale(0.95 1)" text-anchor="end">38.101%</text><text x="635" y="664.85">[mm]</text><text transform="translate(708.4 664.85) scale(0.95 1)" text-anchor="end">2.0</text><circle cx="674.7" cy="50.5" r="10" fill="url(#ledw)"/><circle cx="674" cy="50.2" r="8.8" fill="url(#ledsh)"/><circle cx="674.7" cy="50.8" r="6.1" fill="url(#led)"/><text x="767.3" y="54.85" word-spacing="1.2" letter-spacing="0.08">NO : 7-190</text><text transform="translate(855.2 79.85) scale(1.1 1)" text-anchor="end">gf</text><text transform="translate(916.9 79.85) scale(1.03 1)" text-anchor="end">mm</text><text transform="translate(791.2 99.85) scale(0.88 1)" text-anchor="end">F1</text><text transform="translate(853.2 99.85) scale(0.95 1)" text-anchor="end">56.88</text><text transform="translate(916.4 99.85) scale(0.95 1)" text-anchor="end">0.396</text><text transform="translate(791.2 117.85) scale(0.88 1)" text-anchor="end">F2</text><text transform="translate(853.2 117.85) scale(0.95 1)" text-anchor="end">38.38</text><text transform="translate(916.4 117.85) scale(0.95 1)" text-anchor="end">0.763</text><text transform="translate(791.2 135.85) scale(0.88 1)" text-anchor="end">F3</text><text transform="translate(853.2 135.85) scale(0.95 1)" text-anchor="end">46.78</text><text transform="translate(916.4 135.85) scale(0.95 1)" text-anchor="end">0.389</text><text transform="translate(791.2 153.85) scale(1.1 1)" text-anchor="end">rbt</text><text transform="translate(853.2 153.85) scale(0.95 1)" text-anchor="end">24.58</text><text transform="translate(916.4 153.85) scale(0.95 1)" text-anchor="end">0.792</text><text transform="translate(791.2 171.85) scale(0.95 1)" text-anchor="end">Rmin</text><text transform="translate(853.2 171.85) scale(0.95 1)" text-anchor="end">138.67</text><text transform="translate(916.4 171.85) scale(0.95 1)" text-anchor="end">1.017</text><text x="791.2" y="189.85" text-anchor="end">Ron/D1</text><text transform="translate(853.2 189.85) scale(0.95 1)" text-anchor="end">51.57</text><text transform="translate(916.4 189.85) scale(0.95 1)" text-anchor="end">0.960</text><text transform="translate(791.2 207.85) scale(0.8 1)" text-anchor="end">RF</text><text transform="translate(853.2 207.85) scale(0.95 1)" text-anchor="end">0.00</text><text transform="translate(916.4 207.85) scale(0.95 1)" text-anchor="end">0.565</text><text transform="translate(791.2 225.85) scale(0.92 1)" text-anchor="end">NF</text><text transform="translate(853.2 225.85) scale(0.95 1)" text-anchor="end">0.00</text><text transform="translate(916.4 225.85) scale(0.95 1)" text-anchor="end">0.490</text><text x="791.2" y="243.85" text-anchor="end">Roff/D1</text><text transform="translate(853.2 243.85) scale(0.95 1)" text-anchor="end">28.50</text><text transform="translate(916.4 243.85) scale(0.95 1)" text-anchor="end">0.879</text><text x="791.2" y="261.85" text-anchor="end">ck</text><text transform="translate(853.2 261.85) scale(0.95 1)" text-anchor="end">18.50</text><text transform="translate(916.4 261.85) scale(0.95 1)" text-anchor="end">32.525%</text><text x="841.8" y="664.85">[mm]</text><text transform="translate(914.2 664.85) scale(0.95 1)" text-anchor="end">2.0</text><circle cx="879.9" cy="50.5" r="10" fill="url(#ledw)"/><circle cx="879.2" cy="50.2" r="8.8" fill="url(#ledsh)"/><circle cx="879.9" cy="50.8" r="6.1" fill="url(#led)"/><text x="972.3" y="54.85" word-spacing="1.2" letter-spacing="0.08">NO : 7-191</text><text transform="translate(1060.2 79.85) scale(1.1 1)" text-anchor="end">gf</text><text transform="translate(1121.9 79.85) scale(1.03 1)" text-anchor="end">mm</text><text transform="translate(996.2 99.85) scale(0.88 1)" text-anchor="end">F1</text><text transform="translate(1058.2 99.85) scale(0.95 1)" text-anchor="end">73.71</text><text transform="translate(1121.4 99.85) scale(0.95 1)" text-anchor="end">0.735</text><text transform="translate(996.2 117.85) scale(0.88 1)" text-anchor="end">F2</text><text transform="translate(1058.2 117.85) scale(0.95 1)" text-anchor="end">47.12</text><text transform="translate(1121.4 117.85) scale(0.95 1)" text-anchor="end">1.045</text><text transform="translate(996.2 135.85) scale(0.88 1)" text-anchor="end">F3</text><text transform="translate(1058.2 135.85) scale(0.95 1)" text-anchor="end">48.99</text><text transform="translate(1121.4 135.85) scale(0.95 1)" text-anchor="end">0.633</text><text transform="translate(996.2 153.85) scale(1.1 1)" text-anchor="end">rbt</text><text transform="translate(1058.2 153.85) scale(0.95 1)" text-anchor="end">29.27</text><text transform="translate(1121.4 153.85) scale(0.95 1)" text-anchor="end">0.922</text><text transform="translate(996.2 171.85) scale(0.95 1)" text-anchor="end">Rmin</text><text transform="translate(1058.2 171.85) scale(0.95 1)" text-anchor="end">138.33</text><text transform="translate(1121.4 171.85) scale(0.95 1)" text-anchor="end">1.326</text><text x="996.2" y="189.85" text-anchor="end">Ron/D1</text><text transform="translate(1058.2 189.85) scale(0.95 1)" text-anchor="end">54.64</text><text transform="translate(1121.4 189.85) scale(0.95 1)" text-anchor="end">1.157</text><text transform="translate(996.2 207.85) scale(0.8 1)" text-anchor="end">RF</text><text transform="translate(1058.2 207.85) scale(0.95 1)" text-anchor="end">0.00</text><text transform="translate(1121.4 207.85) scale(0.95 1)" text-anchor="end">0.422</text><text transform="translate(996.2 225.85) scale(0.92 1)" text-anchor="end">NF</text><text transform="translate(1058.2 225.85) scale(0.95 1)" text-anchor="end">0.00</text><text transform="translate(1121.4 225.85) scale(0.95 1)" text-anchor="end">0.347</text><text x="996.2" y="243.85" text-anchor="end">Roff/D1</text><text transform="translate(1058.2 243.85) scale(0.95 1)" text-anchor="end">30.76</text><text transform="translate(1121.4 243.85) scale(0.95 1)" text-anchor="end">0.980</text><text x="996.2" y="261.85" text-anchor="end">ck</text><text transform="translate(1058.2 261.85) scale(0.95 1)" text-anchor="end">26.58</text><text transform="translate(1121.4 261.85) scale(0.95 1)" text-anchor="end">36.066%</text><text x="1047.8" y="664.85">[mm]</text><text transform="translate(1119 664.85) scale(0.95 1)" text-anchor="end">2.0</text><circle cx="1084.9" cy="50.5" r="10" fill="url(#ledw)"/><circle cx="1084.2" cy="50.2" r="8.8" fill="url(#ledsh)"/><circle cx="1084.9" cy="50.8" r="6.1" fill="url(#led)"/><text x="1147.1" y="54.85" word-spacing="1.2" letter-spacing="0.08">NO : 7-192</text><text transform="translate(1235.4 79.85) scale(1.1 1)" text-anchor="end">gf</text><text transform="translate(1296.8 79.85) scale(1.03 1)" text-anchor="end">mm</text><text transform="translate(1171.4 99.85) scale(0.88 1)" text-anchor="end">F1</text><text transform="translate(1233.4 99.85) scale(0.95 1)" text-anchor="end">70.71</text><text transform="translate(1296.3 99.85) scale(0.95 1)" text-anchor="end">0.650</text><text transform="translate(1171.4 117.85) scale(0.88 1)" text-anchor="end">F2</text><text transform="translate(1233.4 117.85) scale(0.95 1)" text-anchor="end">42.88</text><text transform="translate(1296.3 117.85) scale(0.95 1)" text-anchor="end">0.961</text><text transform="translate(1171.4 135.85) scale(0.88 1)" text-anchor="end">F3</text><text transform="translate(1233.4 135.85) scale(0.95 1)" text-anchor="end">50.39</text><text transform="translate(1296.3 135.85) scale(0.95 1)" text-anchor="end">0.536</text><text transform="translate(1171.4 153.85) scale(1.1 1)" text-anchor="end">rbt</text><text transform="translate(1233.4 153.85) scale(0.95 1)" text-anchor="end">27.35</text><text transform="translate(1296.3 153.85) scale(0.95 1)" text-anchor="end">0.882</text><text transform="translate(1171.4 171.85) scale(0.95 1)" text-anchor="end">Rmin</text><text transform="translate(1233.4 171.85) scale(0.95 1)" text-anchor="end">138.67</text><text transform="translate(1296.3 171.85) scale(0.95 1)" text-anchor="end">1.214</text><text x="1171.4" y="189.85" text-anchor="end">Ron/D1</text><text transform="translate(1233.4 189.85) scale(0.95 1)" text-anchor="end">49.66</text><text transform="translate(1296.3 189.85) scale(0.95 1)" text-anchor="end">1.101</text><text transform="translate(1171.4 207.85) scale(0.8 1)" text-anchor="end">RF</text><text transform="translate(1233.4 207.85) scale(0.95 1)" text-anchor="end">0.00</text><text transform="translate(1296.3 207.85) scale(0.95 1)" text-anchor="end">0.451</text><text transform="translate(1171.4 225.85) scale(0.92 1)" text-anchor="end">NF</text><text transform="translate(1233.4 225.85) scale(0.95 1)" text-anchor="end">0.00</text><text transform="translate(1296.3 225.85) scale(0.95 1)" text-anchor="end">0.404</text><text x="1171.4" y="243.85" text-anchor="end">Roff/D1</text><text transform="translate(1233.4 243.85) scale(0.95 1)" text-anchor="end">28.96</text><text transform="translate(1296.3 243.85) scale(0.95 1)" text-anchor="end">0.940</text><text x="1171.4" y="261.85" text-anchor="end">ck</text><text transform="translate(1233.4 261.85) scale(0.95 1)" text-anchor="end">27.82</text><text transform="translate(1296.3 261.85) scale(0.95 1)" text-anchor="end">39.351%</text><text x="1253.7" y="664.85">[mm]</text><text transform="translate(1323 664.85) scale(0.95 1)" text-anchor="end">2.0</text><circle cx="1259.7" cy="49.9" r="10" fill="url(#ledw)"/><circle cx="1259" cy="49.6" r="8.8" fill="url(#ledsh)"/><circle cx="1259.7" cy="50.2" r="6.1" fill="url(#led)"/><text transform="translate(108 54.85) scale(0.95 1)">200.0</text><text transform="translate(108 116.85) scale(0.95 1)">180.0</text><text transform="translate(108 178.85) scale(0.95 1)">160.0</text><text transform="translate(108 240.85) scale(0.95 1)">140.0</text><text transform="translate(108 302.85) scale(0.95 1)">120.0</text><text transform="translate(108 364.85) scale(0.95 1)">100.0</text><text transform="translate(108 426.85) scale(0.95 1)">80.0</text><text transform="translate(108 488.85) scale(0.95 1)">60.0</text><text transform="translate(108 550.85) scale(0.95 1)">40.0</text><text transform="translate(108 612.85) scale(0.95 1)">20.0</text><text transform="translate(108.3 664.85) scale(0.95 1)">0.0</text><text x="108" y="68.45">gf</text><g><text transform="translate(1331.4 54.85) scale(0.95 1)" text-anchor="end">10000.0</text><text x="1314" y="69.85">Ω</text><text transform="translate(1331.4 113.85) scale(0.95 1)" text-anchor="end">9000.0</text><text transform="translate(1331.4 176.85) scale(0.95 1)" text-anchor="end">8000.0</text><text transform="translate(1331.4 239.85) scale(0.95 1)" text-anchor="end">7000.0</text><text transform="translate(1331.4 302.85) scale(0.95 1)" text-anchor="end">6000.0</text><text transform="translate(1331.4 364.85) scale(0.95 1)" text-anchor="end">5000.0</text><text transform="translate(1331.4 427.85) scale(0.95 1)" text-anchor="end">4000.0</text><text transform="translate(1331.4 490.85) scale(0.95 1)" text-anchor="end">3000.0</text><text transform="translate(1331.4 553.85) scale(0.95 1)" text-anchor="end">2000.0</text><text transform="translate(1331.4 616.85) scale(0.95 1)" text-anchor="end">1000.0</text></g><text x="1207.5" y="286.35" font-size="12">高度<tspan dx="2.5">：</tspan></text><text transform="translate(1249 286.35) scale(0.95 1)">80.753</text>
</svg>
<div class="abs" id="bigled"><i></i></div>
<div class="abs" id="rew"><i></i><svg class="abs" style="left:0;top:0" width="29" height="29" viewBox="0 0 29 29"><path d="M17.4 9.8v11l-8.6-5.5zM26.4 9.8v11l-8.6-5.5z" fill="#eeeeee" stroke="#7c7c7c" stroke-width="1" stroke-linejoin="miter"/></svg></div>
<div class="abs" id="cnt">次数<span style="margin-left:3px">：</span></div><div class="abs" id="cntbox"><span>1436</span></div><div class="abs" id="caret"></div>
<div class="abs" id="trk"></div><div class="abs" id="knob"></div>
<div class="abs" id="tbl">
<svg class="abs" style="left:0;top:0" width="1222" height="118" shape-rendering="crispEdges"><line x1="1" x2="424" y1="20.5" y2="20.5" stroke="#ececec"/><line x1="1" x2="424" y1="22.5" y2="22.5" stroke="#ececec"/><line x1="1" x2="424" y1="42.5" y2="42.5" stroke="#ececec"/><line x1="1" x2="424" y1="62.5" y2="62.5" stroke="#ececec"/><line x1="1" x2="424" y1="82.5" y2="82.5" stroke="#ececec"/><line x1="1" x2="424" y1="102.5" y2="102.5" stroke="#ececec"/><line x1="51.5" x2="51.5" y1="1" y2="117" stroke="#ececec"/><line x1="53.5" x2="53.5" y1="1" y2="117" stroke="#ececec"/><line x1="128.5" x2="128.5" y1="1" y2="117" stroke="#ececec"/><line x1="235.5" x2="235.5" y1="1" y2="117" stroke="#ececec"/><line x1="319.5" x2="319.5" y1="1" y2="117" stroke="#ececec"/><line x1="445" x2="591" y1="20.5" y2="20.5" stroke="#ececec"/><line x1="445" x2="591" y1="22.5" y2="22.5" stroke="#ececec"/><line x1="445" x2="591" y1="42.5" y2="42.5" stroke="#ececec"/><line x1="445" x2="591" y1="62.5" y2="62.5" stroke="#ececec"/><line x1="445" x2="591" y1="82.5" y2="82.5" stroke="#ececec"/><line x1="445" x2="591" y1="102.5" y2="102.5" stroke="#ececec"/><line x1="495.5" x2="495.5" y1="1" y2="117" stroke="#ececec"/><line x1="497.5" x2="497.5" y1="1" y2="117" stroke="#ececec"/><line x1="613" x2="1035" y1="20.5" y2="20.5" stroke="#ececec"/><line x1="613" x2="1035" y1="22.5" y2="22.5" stroke="#ececec"/><line x1="613" x2="1035" y1="42.5" y2="42.5" stroke="#ececec"/><line x1="613" x2="1035" y1="62.5" y2="62.5" stroke="#ececec"/><line x1="613" x2="1035" y1="82.5" y2="82.5" stroke="#ececec"/><line x1="613" x2="1035" y1="102.5" y2="102.5" stroke="#ececec"/><line x1="664.5" x2="664.5" y1="1" y2="117" stroke="#ececec"/><line x1="666.5" x2="666.5" y1="1" y2="117" stroke="#ececec"/><line x1="740.5" x2="740.5" y1="1" y2="117" stroke="#ececec"/><line x1="848.5" x2="848.5" y1="1" y2="117" stroke="#ececec"/><line x1="930.5" x2="930.5" y1="1" y2="117" stroke="#ececec"/><line x1="1057" x2="1203" y1="20.5" y2="20.5" stroke="#ececec"/><line x1="1057" x2="1203" y1="22.5" y2="22.5" stroke="#ececec"/><line x1="1057" x2="1203" y1="42.5" y2="42.5" stroke="#ececec"/><line x1="1057" x2="1203" y1="62.5" y2="62.5" stroke="#ececec"/><line x1="1057" x2="1203" y1="82.5" y2="82.5" stroke="#ececec"/><line x1="1057" x2="1203" y1="102.5" y2="102.5" stroke="#ececec"/><line x1="1107.5" x2="1107.5" y1="1" y2="117" stroke="#ececec"/><line x1="1109.5" x2="1109.5" y1="1" y2="117" stroke="#ececec"/></svg>
<div class="sb" style="left:424.6px;width:17.9px"><div class="au" style="left:3.95px;top:6.4px"></div><div class="ad" style="left:3.95px;top:106.2px"></div></div>
<div class="sb" style="left:591.8px;width:17.8px"><div class="au" style="left:3.9px;top:6.4px"></div><div class="ad" style="left:3.9px;top:106.2px"></div><div class="th" style="left:0.6px;width:14.5px;top:23.2px;height:14.3px"><div class="gr" style="top:4.15px"></div><div class="gr" style="top:6.15px"></div><div class="gr" style="top:8.15px"></div></div></div>
<div class="sb" style="left:1035.6px;width:18.8px"><div class="au" style="left:4.4px;top:6.4px"></div><div class="ad" style="left:4.4px;top:106.2px"></div><div class="th" style="left:0.6px;width:14.8px;top:49.3px;height:48.2px"><div class="gr" style="top:21.1px"></div><div class="gr" style="top:23.1px"></div><div class="gr" style="top:25.1px"></div></div></div>
<div class="sb" style="left:1203.6px;width:18.3px"><div class="au" style="left:4.15px;top:6.4px"></div><div class="ad" style="left:4.15px;top:106.2px"></div><div class="th" style="left:0.7px;width:14.5px;top:18.1px;height:14.1px"><div class="gr" style="top:4.05px"></div><div class="gr" style="top:6.05px"></div><div class="gr" style="top:8.05px"></div></div></div>
<div class="sep" style="left:442.5px"></div>
<div class="sep" style="left:609.6px"></div>
<div class="sep" style="left:1054.3px"></div>
<span class="h" style="left:-0.4px">上层LED</span>
<span class="h" style="left:59.4px">正向压降(V)</span>
<span class="h" style="left:134.1px">正向等效电阻(kΩ)</span>
<span class="h" style="left:240.7px">反向漏电(uA)</span>
<span class="h" style="left:324px">反向等效电阻(kΩ)</span>
<span class="h" style="left:444.6px">上层绝缘</span>
<span class="h" style="left:503.3px">绝缘阻值(MΩ)</span>
<span class="h" style="left:611.9px">下层LED</span>
<span class="h" style="left:670.9px">正向压降(V)</span>
<span class="h" style="left:746px">正向等效电阻(kΩ)</span>
<span class="h" style="left:853.6px">反向漏电(uA)</span>
<span class="h" style="left:935.2px">反向等效电阻(kΩ)</span>
<span class="h" style="left:1056px">下层绝缘</span>
<span class="h" style="left:1115px">绝缘阻值(MΩ)</span>
<span class="n" style="left:6.3px;top:23.4px">1</span>
<span class="n" style="left:449.6px;top:23.4px">4</span>
<span class="n" style="left:449.6px;top:43.4px">5</span>
<span class="n" style="left:449.6px;top:63.4px">6</span>
<span class="n" style="left:449.6px;top:83.4px">7</span>
<span class="n" style="left:449.6px;top:103.4px">8</span>
<span class="n" style="left:1062px;top:23.4px">1</span>
<span class="n" style="left:1062px;top:43.4px">2</span>
<span class="n" style="left:1062px;top:63.4px">3</span>
<span class="n" style="left:1062px;top:83.4px">4</span>
<span class="n" style="left:1062px;top:103.4px">5</span>
<div class="cm" style="left:54.4px;top:23.4px"></div>
<div class="cm" style="left:741.4px;top:43.8px"></div>
<div class="cm" style="left:1110.1px;top:63.3px"></div>
</div>
<div class="abs" id="vsb"><div class="au" style="left:4.5px;top:7px"></div><div class="ad" style="left:4.5px;top:785px"></div><div class="th" style="left:0.4px;width:14.6px;top:21.3px;height:323px"><div class="gr" style="top:157px"></div><div class="gr" style="top:159.5px"></div><div class="gr" style="top:162px"></div></div></div>
<div class="abs" id="hsb"><div class="al" style="left:6px;top:3.5px"></div><div class="ar" style="left:1409px;top:4px"></div><div class="thh" style="left:381.5px;top:-0.4px;width:512.5px;height:14px"><div class="gv" style="left:252px"></div><div class="gv" style="left:254.5px"></div><div class="gv" style="left:257px"></div></div></div>
<div class="abs" id="corner"></div>
</body></html>
